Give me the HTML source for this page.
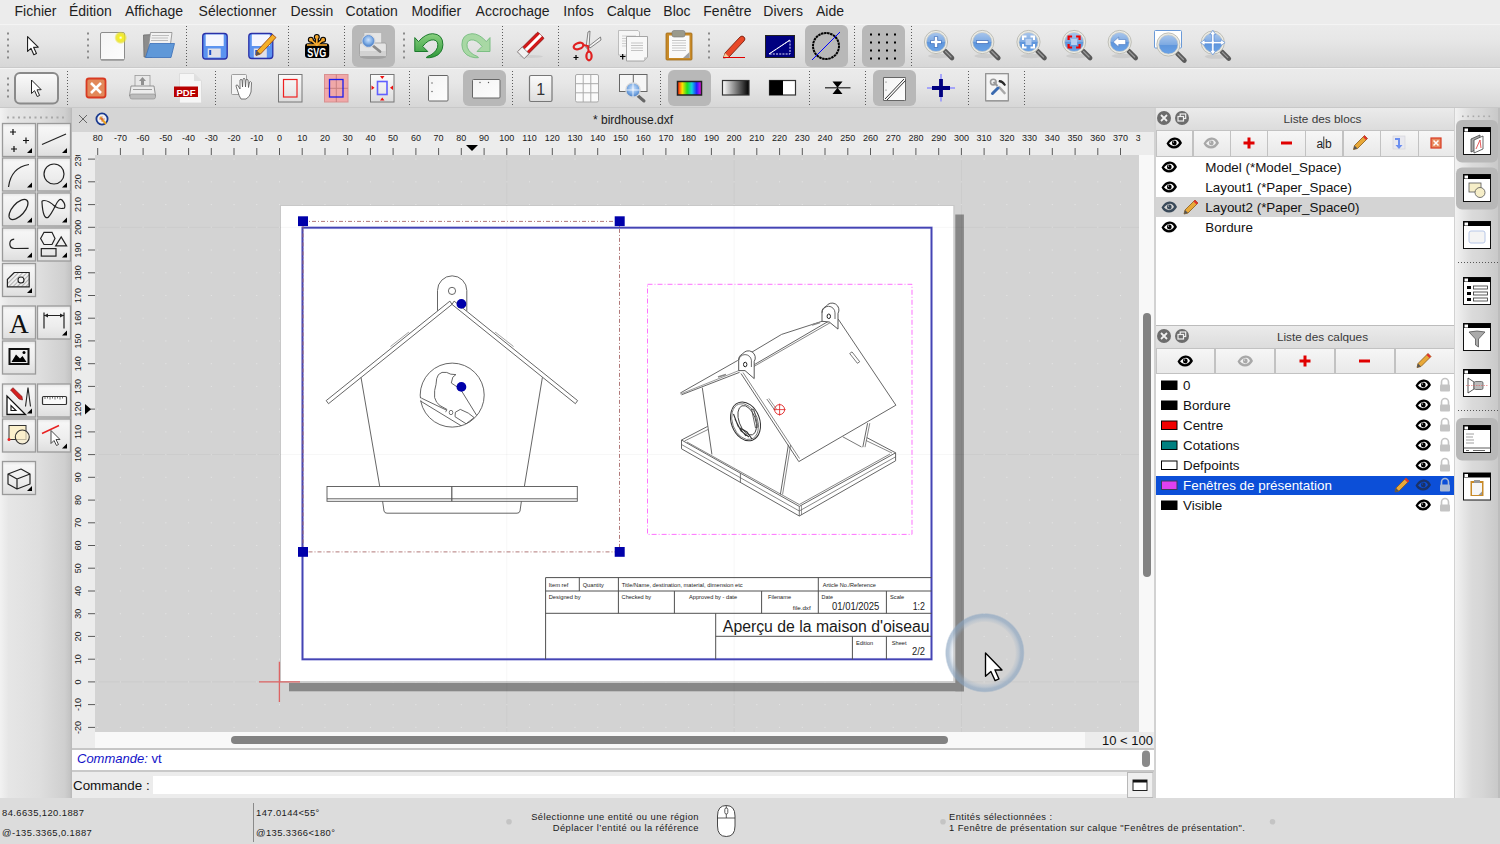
<!DOCTYPE html>
<html><head><meta charset="utf-8"><style>
*{margin:0;padding:0;box-sizing:border-box}
html,body{width:1500px;height:844px;overflow:hidden;background:#ececec;font-family:"Liberation Sans",sans-serif;color:#000}
.a{position:absolute}
.t{position:absolute;white-space:nowrap;line-height:1}
svg.ov{position:absolute;left:0;top:0;width:1500px;height:844px}
svg text{font-family:"Liberation Sans",sans-serif}
.tb{position:absolute;left:0;width:1500px;background:linear-gradient(#ebebeb,#e7e7e7 35%,#d6d6d6)}
.tog{position:absolute;background:#b8b8b8;border-radius:6px}
</style></head><body>
<div class="a" style="left:0;top:0;width:1500px;height:24px;background:#ececec"></div>
<span class="t" style="left:14.5px;top:4px;font-size:14px;color:#1e1e1e">Fichier</span>
<span class="t" style="left:69px;top:4px;font-size:14px;color:#1e1e1e">Édition</span>
<span class="t" style="left:125px;top:4px;font-size:14px;color:#1e1e1e">Affichage</span>
<span class="t" style="left:198.6px;top:4px;font-size:14px;color:#1e1e1e">Sélectionner</span>
<span class="t" style="left:290.6px;top:4px;font-size:14px;color:#1e1e1e">Dessin</span>
<span class="t" style="left:345.6px;top:4px;font-size:14px;color:#1e1e1e">Cotation</span>
<span class="t" style="left:411.4px;top:4px;font-size:14px;color:#1e1e1e">Modifier</span>
<span class="t" style="left:475.6px;top:4px;font-size:14px;color:#1e1e1e">Accrochage</span>
<span class="t" style="left:563.3px;top:4px;font-size:14px;color:#1e1e1e">Infos</span>
<span class="t" style="left:606.7px;top:4px;font-size:14px;color:#1e1e1e">Calque</span>
<span class="t" style="left:663.3px;top:4px;font-size:14px;color:#1e1e1e">Bloc</span>
<span class="t" style="left:703.3px;top:4px;font-size:14px;color:#1e1e1e">Fenêtre</span>
<span class="t" style="left:763.3px;top:4px;font-size:14px;color:#1e1e1e">Divers</span>
<span class="t" style="left:816px;top:4px;font-size:14px;color:#1e1e1e">Aide</span>
<div class="tb" style="top:24px;height:44px;border-top:1px solid #f4f4f4"></div>
<div class="tb" style="top:68px;height:40px;border-top:1px solid #f4f4f4"></div>
<div class="a" style="left:0;top:107px;width:1500px;height:1px;background:#c8c8c8"></div>
<div class="a" style="left:0;top:67px;width:1500px;height:1px;background:#cacaca"></div>
<div class="tog" style="left:352px;top:25px;width:43px;height:42px"></div>
<div class="tog" style="left:805px;top:25px;width:43px;height:42px"></div>
<div class="tog" style="left:862px;top:25px;width:43px;height:42px"></div>
<div class="tog" style="left:463px;top:70px;width:43px;height:36px"></div>
<div class="tog" style="left:668px;top:70px;width:43px;height:36px"></div>
<div class="tog" style="left:873px;top:70px;width:43px;height:36px"></div>
<div class="a" style="left:0;top:108px;width:72px;height:690px;background:linear-gradient(90deg,#f2f2f2 0%,#e6e6e6 12%,#dedede 55%,#cfcfcf 90%,#c4c4c4 97%,#b8b8b8)"></div>
<div class="a" style="left:72px;top:108px;width:1082px;height:24px;background:#d5d5d5"></div>
<div class="a" style="left:72px;top:132px;width:1082px;height:23px;background:#ececec"></div>
<div class="a" style="left:72px;top:155px;width:23px;height:593px;background:#ececec"></div>
<div class="a" style="left:95px;top:155px;width:1044px;height:577px;background:#d3d3d3"></div>
<div class="a" style="left:1139px;top:155px;width:15px;height:577px;background:#f8f8f8"></div>
<div class="a" style="left:95px;top:732px;width:990px;height:16px;background:#f8f8f8"></div>
<div class="a" style="left:1085px;top:732px;width:69px;height:16px;background:#ececec"></div>
<div class="a" style="left:72px;top:748px;width:1082px;height:2px;background:#c6c6c6"></div>
<div class="a" style="left:72px;top:750px;width:1082px;height:20px;background:#fff"></div>
<div class="a" style="left:72px;top:770px;width:1082px;height:2px;background:#c9c9c9"></div>
<div class="a" style="left:72px;top:772px;width:1082px;height:26px;background:#ececec"></div>
<div class="a" style="left:153px;top:776px;width:974px;height:18px;background:#fff"></div>
<div class="a" style="left:1154px;top:108px;width:301px;height:690px;background:#d2d2d2"></div>
<div class="a" style="left:1455px;top:108px;width:45px;height:690px;background:linear-gradient(90deg,#f2f2f2,#dadada 38%,#d6d6d6 60%,#c9c9c9 95%,#bdbdbd 95.5%)"></div>
<div class="a" style="left:0;top:798px;width:1500px;height:46px;background:#dcdcdc"></div><div class="a" style="left:1156px;top:108px;width:298px;height:22px;background:linear-gradient(#ebebeb,#dcdcdc)"></div>
<div class="a" style="left:1156px;top:130px;width:298px;height:26.5px;background:#c2c2c2"></div>
<div class="a" style="left:1156.5px;top:131px;width:35.799999999999955px;height:24.5px;background:linear-gradient(#f6f6f6,#e9e9e9)"></div>
<div class="a" style="left:1193.8px;top:131px;width:35.90000000000009px;height:24.5px;background:linear-gradient(#f6f6f6,#e9e9e9)"></div>
<div class="a" style="left:1231px;top:131px;width:36px;height:24.5px;background:linear-gradient(#f6f6f6,#e9e9e9)"></div>
<div class="a" style="left:1268.4px;top:131px;width:36.299999999999955px;height:24.5px;background:linear-gradient(#f6f6f6,#e9e9e9)"></div>
<div class="a" style="left:1306px;top:131px;width:36px;height:24.5px;background:linear-gradient(#f6f6f6,#e9e9e9)"></div>
<div class="a" style="left:1343.5px;top:131px;width:36.09999999999991px;height:24.5px;background:linear-gradient(#f6f6f6,#e9e9e9)"></div>
<div class="a" style="left:1381px;top:131px;width:36.700000000000045px;height:24.5px;background:linear-gradient(#f6f6f6,#e9e9e9)"></div>
<div class="a" style="left:1419px;top:131px;width:34.5px;height:24.5px;background:linear-gradient(#f6f6f6,#e9e9e9)"></div>
<div class="a" style="left:1156px;top:156.5px;width:298px;height:168px;background:#fff"></div>
<div class="a" style="left:1156px;top:197px;width:298px;height:20px;background:#d4d4d4"></div>
<div class="a" style="left:1156px;top:324.5px;width:298px;height:1.5px;background:#bcbcbc"></div>
<div class="a" style="left:1156px;top:326px;width:298px;height:22px;background:linear-gradient(#ebebeb,#dcdcdc)"></div>
<div class="a" style="left:1156px;top:348px;width:298px;height:26px;background:#c2c2c2"></div>
<div class="a" style="left:1156.5px;top:349px;width:57.5px;height:24px;background:linear-gradient(#f6f6f6,#e9e9e9)"></div>
<div class="a" style="left:1215.5px;top:349px;width:58.700000000000045px;height:24px;background:linear-gradient(#f6f6f6,#e9e9e9)"></div>
<div class="a" style="left:1275.7px;top:349px;width:58.700000000000045px;height:24px;background:linear-gradient(#f6f6f6,#e9e9e9)"></div>
<div class="a" style="left:1336px;top:349px;width:58px;height:24px;background:linear-gradient(#f6f6f6,#e9e9e9)"></div>
<div class="a" style="left:1395.5px;top:349px;width:58.0px;height:24px;background:linear-gradient(#f6f6f6,#e9e9e9)"></div>
<div class="a" style="left:1156px;top:374px;width:298px;height:424px;background:#fff"></div>
<div class="a" style="left:1156px;top:475.5px;width:298px;height:19.5px;background:#0c4fd8"></div>
<svg class="ov" width="1500" height="844" viewBox="0 0 1500 844">
<defs>
<linearGradient id="gpage" x1="0" y1="0" x2="1" y2="1"><stop offset="0" stop-color="#f4f4f4"/><stop offset="1" stop-color="#fdfdfd"/></linearGradient>
<linearGradient id="gbtn" x1="0" y1="0" x2="0" y2="1"><stop offset="0" stop-color="#fbfbfb"/><stop offset="0.6" stop-color="#eaeaea"/><stop offset="1" stop-color="#dcdcdc"/></linearGradient>
<linearGradient id="gblue" x1="0" y1="0" x2="0" y2="1"><stop offset="0" stop-color="#7ab0f4"/><stop offset="1" stop-color="#3f86e6"/></linearGradient>
<radialGradient id="gstar"><stop offset="0" stop-color="#ffffff"/><stop offset="0.3" stop-color="#f6f020"/><stop offset="0.7" stop-color="#e8e020" stop-opacity="0.8"/><stop offset="1" stop-color="#e8e020" stop-opacity="0"/></radialGradient>
<radialGradient id="glens" cx="0.5" cy="0.4"><stop offset="0" stop-color="#cfe2fb"/><stop offset="0.7" stop-color="#7faee6"/><stop offset="1" stop-color="#5d8fd0"/></radialGradient>
<linearGradient id="grain" x1="0" x2="1"><stop offset="0" stop-color="#ff1010"/><stop offset="0.2" stop-color="#ffe000"/><stop offset="0.4" stop-color="#20e020"/><stop offset="0.6" stop-color="#10d0e0"/><stop offset="0.8" stop-color="#2020ff"/><stop offset="1" stop-color="#ff10e0"/></linearGradient>
<linearGradient id="ggrad" x1="0" x2="1"><stop offset="0" stop-color="#ffffff"/><stop offset="1" stop-color="#000000"/></linearGradient>
<linearGradient id="ggreen" x1="0" y1="0" x2="0" y2="1"><stop offset="0" stop-color="#8ad080"/><stop offset="1" stop-color="#2f9a3a"/></linearGradient>
</defs>
<rect x="7" y="32.5" width="2" height="2" fill="#8a8a8a"/>
<rect x="7" y="38.5" width="2" height="2" fill="#8a8a8a"/>
<rect x="7" y="44.5" width="2" height="2" fill="#8a8a8a"/>
<rect x="7" y="50.5" width="2" height="2" fill="#8a8a8a"/>
<rect x="7" y="56.5" width="2" height="2" fill="#8a8a8a"/>
<path transform="translate(27,36) scale(1.1)" d="M0.5,0.5 L0.5,14 L3.6,11.2 L6.2,17 L8.6,16 L6,10.3 L10.2,10.2 Z" fill="#fff" stroke="#222" stroke-width="1" stroke-linejoin="round"/>
<rect x="87" y="32.5" width="2" height="2" fill="#8a8a8a"/>
<rect x="87" y="38.5" width="2" height="2" fill="#8a8a8a"/>
<rect x="87" y="44.5" width="2" height="2" fill="#8a8a8a"/>
<rect x="87" y="50.5" width="2" height="2" fill="#8a8a8a"/>
<rect x="87" y="56.5" width="2" height="2" fill="#8a8a8a"/>
<rect x="100.5" y="32.5" width="24" height="27.5" rx="1.5" fill="url(#gpage)" stroke="#8c8c8c" stroke-width="1"/>
<rect x="101" y="59" width="23" height="1.5" fill="#9a9a9a"/>
<circle cx="120.7" cy="37.7" r="6.5" fill="url(#gstar)"/>
<path d="M143.5,35 L153,34.5 L152,57 L144,57 Z" fill="#8c8c8c" stroke="#6e6e6e" stroke-width="0.8"/>
<path d="M150.5,32.5 L172,32.5 L170,48 L148,50 Z" fill="#f2f2f2" stroke="#8a8a8a" stroke-width="0.8"/>
<path d="M152,35.5 L169,35.5 M151.5,38 L168,38 M151,40.5 L168,40.5" stroke="#bdbdbd" stroke-width="1.2"/>
<path d="M150,43.5 L174.5,43.5 L171,57.5 L145.5,57.5 Z" fill="#5f98d8" stroke="#3a6fb8" stroke-width="0.8"/>
<line x1="186.5" y1="26" x2="186.5" y2="66" stroke="#5a5a5a" stroke-width="1" stroke-dasharray="1 2"/>
<g transform="translate(202.2,33)">
<rect x="0.5" y="0.5" width="24.5" height="25.5" rx="3" fill="#5b93f0" stroke="#2a30a8" stroke-width="1.3"/>
<rect x="3.5" y="1.5" width="18" height="11.5" fill="#f4f6ff"/>
<rect x="5.5" y="15.5" width="13" height="9" fill="#e0e0e8"/>
<rect x="7" y="17" width="2" height="5" fill="#2050c8"/>
</g>
<g transform="translate(248.3,33)">
<rect x="0.5" y="0.5" width="24" height="25" rx="3" fill="#5b93f0" stroke="#2a30a8" stroke-width="1.3"/>
<rect x="3.5" y="1.5" width="18" height="11.5" fill="#f4f6ff"/>
<rect x="5.5" y="15.5" width="13" height="9" fill="#e0e0e8"/>
<rect x="7" y="17" width="2" height="5" fill="#2050c8"/>
</g>
<path d="M257,51 L272.5,34.5 L276,37.5 L260.5,54 L256,55.5 Z" fill="#f4b028" stroke="#a04c10" stroke-width="0.9"/>
<path d="M256,55.5 L257,51 L260.5,54 Z" fill="#555"/>
<line x1="288.5" y1="26" x2="288.5" y2="66" stroke="#5a5a5a" stroke-width="1" stroke-dasharray="1 2"/>
<g stroke="#000" stroke-width="4.2" stroke-linecap="round"><line x1="316.8" y1="45" x2="310.8" y2="39.7"/><line x1="316.8" y1="45" x2="316.8" y2="36.9"/><line x1="316.8" y1="45" x2="323.1" y2="39.7"/></g>
<circle cx="310.8" cy="39.7" r="3" fill="#000"/>
<circle cx="316.8" cy="36.9" r="3" fill="#000"/>
<circle cx="323.1" cy="39.7" r="3" fill="#000"/>
<rect x="305" y="43.2" width="24.2" height="14.8" rx="3.2" fill="#000"/>
<g stroke="#f4a830" stroke-width="1.8" stroke-linecap="round"><line x1="316.8" y1="45" x2="310.8" y2="39.7"/><line x1="316.8" y1="45" x2="316.8" y2="36.9"/><line x1="316.8" y1="45" x2="323.1" y2="39.7"/></g>
<circle cx="310.8" cy="39.7" r="1.9" fill="#f4a830"/>
<circle cx="316.8" cy="36.9" r="1.9" fill="#f4a830"/>
<circle cx="323.1" cy="39.7" r="1.9" fill="#f4a830"/>
<rect x="307" y="44.2" width="20" height="1.6" fill="#f4a830"/>
<text x="316.8" y="56.6" text-anchor="middle" style="font-size:12.5px;font-weight:bold" fill="#fff" textLength="19" lengthAdjust="spacingAndGlyphs">SVG</text>
<line x1="344.5" y1="26" x2="344.5" y2="66" stroke="#5a5a5a" stroke-width="1" stroke-dasharray="1 2"/>
<ellipse cx="373" cy="57" rx="13" ry="2" fill="#8a8a8a" opacity="0.5"/>
<rect x="364" y="32.7" width="17.7" height="12" fill="#e6e6e6" stroke="#b0b0b0" stroke-width="0.7"/>
<path d="M361,43 L385,43 Q386.4,43 386.4,45 L386.4,54.5 Q386.4,56.5 384.5,56.5 L361.5,56.5 Q359.5,56.5 359.5,54.5 L359.5,45 Q359.5,43 361,43 Z" fill="#e4e4e4" stroke="#9a9a9a" stroke-width="0.8"/>
<rect x="360" y="51" width="26" height="5" fill="#d2d2d2"/>
<line x1="372" y1="45" x2="380" y2="51.5" stroke="#8a8a8a" stroke-width="2.8" stroke-linecap="round"/>
<circle cx="368.4" cy="41" r="6.6" fill="#f0f0f0" stroke="#c8c8c8" stroke-width="0.6"/>
<circle cx="368.4" cy="41" r="5.6" fill="url(#glens)" stroke="#5a8ad0" stroke-width="0.8"/>
<rect x="403" y="32.5" width="2" height="2" fill="#8a8a8a"/>
<rect x="403" y="38.5" width="2" height="2" fill="#8a8a8a"/>
<rect x="403" y="44.5" width="2" height="2" fill="#8a8a8a"/>
<rect x="403" y="50.5" width="2" height="2" fill="#8a8a8a"/>
<rect x="403" y="56.5" width="2" height="2" fill="#8a8a8a"/>
<path transform="translate(414.3,33.7)" d="M0.5,3.9 L4.2,7.9 Q11,0 18.4,0 Q28.6,0.5 28.6,11 Q28.3,20 20,23 Q15,24.5 12.2,24 Q12,23.2 13,22.8 Q21,20 23.3,13.5 Q24.5,7 19.5,6.2 Q14,5.5 8.4,12.7 L13.5,17.8 L0.5,17.8 Z" fill="url(#ggreen)" stroke="#1c7a2c" stroke-width="1" stroke-linejoin="round"/>
<path transform="translate(461.5,33.7) translate(29,0) scale(-1,1)" d="M0.5,3.9 L4.2,7.9 Q11,0 18.4,0 Q28.6,0.5 28.6,11 Q28.3,20 20,23 Q15,24.5 12.2,24 Q12,23.2 13,22.8 Q21,20 23.3,13.5 Q24.5,7 19.5,6.2 Q14,5.5 8.4,12.7 L13.5,17.8 L0.5,17.8 Z" fill="#a8d8a4" stroke="#7cbf84" stroke-width="1" stroke-linejoin="round"/>
<line x1="502.5" y1="26" x2="502.5" y2="66" stroke="#5a5a5a" stroke-width="1" stroke-dasharray="1 2"/>
<ellipse cx="531" cy="56.5" rx="12" ry="1.5" fill="#cfcfcf"/>
<g transform="translate(531,45) rotate(-45)"><rect x="-14" y="-4.5" width="28" height="9" rx="1" fill="#d41818" stroke="#8a1010" stroke-width="0.8"/><rect x="-14" y="-1.5" width="28" height="3" fill="#fff"/><rect x="-14.5" y="-4.8" width="7" height="9.6" fill="#f2f2f2" stroke="#777" stroke-width="0.8"/></g>
<line x1="558.5" y1="26" x2="558.5" y2="66" stroke="#5a5a5a" stroke-width="1" stroke-dasharray="1 2"/>
<path d="M586,48 L588,32 L590,31 L589,48 Z" fill="#f4f4f4" stroke="#666" stroke-width="0.8"/>
<path d="M589,46 L600.5,37 L601,40 L590,48 Z" fill="#f4f4f4" stroke="#666" stroke-width="0.8"/>
<ellipse cx="578.5" cy="46" rx="5" ry="3" fill="none" stroke="#e02020" stroke-width="2.2" transform="rotate(-20 578.5 46)"/>
<ellipse cx="589" cy="56" rx="2.6" ry="4.3" fill="none" stroke="#e02020" stroke-width="2.2"/>
<path d="M583,45 L588,46 L588.5,51" stroke="#e02020" stroke-width="2" fill="none"/>
<path d="M573.5,57.5 h5 M576,55 v5" stroke="#000" stroke-width="1.2"/>
<path d="M618.5,30.5 L638,30.5 L639.5,32 L639.5,55 L618.5,55 Z" fill="#f6f6f6" stroke="#b0b0b0" stroke-width="0.8"/>
<line x1="622" y1="36" x2="636" y2="36" stroke="#cfcfcf" stroke-width="1"/>
<line x1="622" y1="38.5" x2="636" y2="38.5" stroke="#cfcfcf" stroke-width="1"/>
<line x1="622" y1="41" x2="636" y2="41" stroke="#cfcfcf" stroke-width="1"/>
<line x1="622" y1="43.5" x2="636" y2="43.5" stroke="#cfcfcf" stroke-width="1"/>
<line x1="622" y1="46" x2="636" y2="46" stroke="#cfcfcf" stroke-width="1"/>
<path d="M626.5,36.5 L647.5,36.5 L647.5,57 L644,61 L626.5,61 Z" fill="#f8f8f8" stroke="#9c9c9c" stroke-width="0.9"/>
<path d="M644,61 L644,57.5 L647.5,57 Z" fill="#c8c8c8"/>
<line x1="631" y1="43" x2="643" y2="43" stroke="#c4c4c4" stroke-width="1"/>
<line x1="631" y1="45.5" x2="643" y2="45.5" stroke="#c4c4c4" stroke-width="1"/>
<line x1="631" y1="48" x2="643" y2="48" stroke="#c4c4c4" stroke-width="1"/>
<line x1="631" y1="50.5" x2="643" y2="50.5" stroke="#c4c4c4" stroke-width="1"/>
<path d="M620,56.5 h5.5 M622.7,54 v5.5" stroke="#000" stroke-width="1.2"/>
<rect x="666" y="33" width="26" height="27" rx="1" fill="#c88a28" stroke="#a06a18" stroke-width="0.8"/>
<rect x="669" y="35.5" width="20.5" height="22.5" fill="#fafafa"/>
<rect x="672" y="30.5" width="13" height="6.5" rx="2" fill="#9a9a8c" stroke="#777" stroke-width="0.6"/>
<line x1="672" y1="40.5" x2="686" y2="40.5" stroke="#c8c8c8" stroke-width="1"/>
<line x1="672" y1="43" x2="686" y2="43" stroke="#c8c8c8" stroke-width="1"/>
<line x1="672" y1="45.5" x2="686" y2="45.5" stroke="#c8c8c8" stroke-width="1"/>
<line x1="672" y1="48" x2="686" y2="48" stroke="#c8c8c8" stroke-width="1"/>
<line x1="672" y1="50.5" x2="686" y2="50.5" stroke="#c8c8c8" stroke-width="1"/>
<path d="M683,58 L689.5,58 L689.5,52 Z" fill="#a0a0a0"/>
<rect x="708" y="32.5" width="2" height="2" fill="#8a8a8a"/>
<rect x="708" y="38.5" width="2" height="2" fill="#8a8a8a"/>
<rect x="708" y="44.5" width="2" height="2" fill="#8a8a8a"/>
<rect x="708" y="50.5" width="2" height="2" fill="#8a8a8a"/>
<rect x="708" y="56.5" width="2" height="2" fill="#8a8a8a"/>
<path d="M725,53 L740,37 Q742,35 744,37 Q746,39 744,41 L729,57 L723.5,58 Z" fill="#e84828" stroke="#7a2010" stroke-width="0.9"/>
<path d="M723.5,58 L725,53 L729,57 Z" fill="#f0d0a0"/>
<line x1="723" y1="57.5" x2="745" y2="57.5" stroke="#e00000" stroke-width="1"/>
<rect x="765.5" y="35.5" width="29" height="22" fill="#000080" stroke="#222" stroke-width="1"/>
<path d="M769,54 L790,40 L790,54 Z" fill="none" stroke="#e0e0ff" stroke-width="1" stroke-dasharray="2 1.2"/>
<line x1="769" y1="54" x2="790" y2="40" stroke="#fff" stroke-width="1"/>
<circle cx="826" cy="46" r="13" fill="none" stroke="#000" stroke-width="2" stroke-dasharray="2.5 0.6"/>
<line x1="812" y1="60" x2="840" y2="32" stroke="#0000ff" stroke-width="1"/>
<line x1="854.5" y1="26" x2="854.5" y2="66" stroke="#5a5a5a" stroke-width="1" stroke-dasharray="1 2"/>
<rect x="870" y="33.5" width="2" height="2" fill="#000"/>
<rect x="878" y="33.5" width="2" height="2" fill="#000"/>
<rect x="886" y="33.5" width="2" height="2" fill="#000"/>
<rect x="894" y="33.5" width="2" height="2" fill="#000"/>
<rect x="870" y="41.5" width="2" height="2" fill="#000"/>
<rect x="878" y="41.5" width="2" height="2" fill="#000"/>
<rect x="886" y="41.5" width="2" height="2" fill="#000"/>
<rect x="894" y="41.5" width="2" height="2" fill="#000"/>
<rect x="870" y="49.5" width="2" height="2" fill="#000"/>
<rect x="878" y="49.5" width="2" height="2" fill="#000"/>
<rect x="886" y="49.5" width="2" height="2" fill="#000"/>
<rect x="894" y="49.5" width="2" height="2" fill="#000"/>
<rect x="870" y="57.5" width="2" height="2" fill="#000"/>
<rect x="878" y="57.5" width="2" height="2" fill="#000"/>
<rect x="886" y="57.5" width="2" height="2" fill="#000"/>
<rect x="894" y="57.5" width="2" height="2" fill="#000"/>
<line x1="911.5" y1="26" x2="911.5" y2="66" stroke="#5a5a5a" stroke-width="1" stroke-dasharray="1 2"/>
<defs><linearGradient id="glens2" x1="0" y1="0" x2="0" y2="1"><stop offset="0" stop-color="#a9c6ec"/><stop offset="0.5" stop-color="#7eaae2"/><stop offset="0.52" stop-color="#5f96dc"/><stop offset="1" stop-color="#6aa2e6"/></linearGradient></defs>
<ellipse cx="939" cy="56" rx="11" ry="2.2" fill="#b8b8b8" opacity="0.45"/><line x1="945" y1="51" x2="952" y2="58" stroke="#5a5a5a" stroke-width="4.6" stroke-linecap="round"/>
<line x1="945.5" y1="51.5" x2="951" y2="57" stroke="#9a9a9a" stroke-width="1.2" stroke-linecap="round"/>
<circle cx="936" cy="42" r="11.6" fill="#ecece6" stroke="#b8b8b0" stroke-width="0.9"/>
<circle cx="936" cy="42" r="9.6" fill="url(#glens2)" stroke="#c8c8c0" stroke-width="0.6"/>
<g transform="translate(936,42)"><path d="M-5.5,0 h11 M0,-5.5 v11" stroke="#3a6ab8" stroke-width="4.2"/><path d="M-5,0 h10 M0,-5 v10" stroke="#fff" stroke-width="2.6"/></g>
<ellipse cx="985.3" cy="56" rx="11" ry="2.2" fill="#b8b8b8" opacity="0.45"/><line x1="991.3" y1="51" x2="998.3" y2="58" stroke="#5a5a5a" stroke-width="4.6" stroke-linecap="round"/>
<line x1="991.8" y1="51.5" x2="997.3" y2="57" stroke="#9a9a9a" stroke-width="1.2" stroke-linecap="round"/>
<circle cx="982.3" cy="42" r="11.6" fill="#ecece6" stroke="#b8b8b0" stroke-width="0.9"/>
<circle cx="982.3" cy="42" r="9.6" fill="url(#glens2)" stroke="#c8c8c0" stroke-width="0.6"/>
<g transform="translate(982.3,42)"><path d="M-6,0 h12" stroke="#3a6ab8" stroke-width="4"/><path d="M-5.5,0 h11" stroke="#fff" stroke-width="2.4"/></g>
<ellipse cx="1031.5" cy="56" rx="11" ry="2.2" fill="#b8b8b8" opacity="0.45"/><line x1="1037.5" y1="51" x2="1044.5" y2="58" stroke="#5a5a5a" stroke-width="4.6" stroke-linecap="round"/>
<line x1="1038.0" y1="51.5" x2="1043.5" y2="57" stroke="#9a9a9a" stroke-width="1.2" stroke-linecap="round"/>
<circle cx="1028.5" cy="42" r="11.6" fill="#ecece6" stroke="#b8b8b0" stroke-width="0.9"/>
<circle cx="1028.5" cy="42" r="9.6" fill="url(#glens2)" stroke="#c8c8c0" stroke-width="0.6"/>
<g transform="translate(1028.5,42)"><rect x="-3" y="-3" width="6" height="6" fill="#b8d0f0"/><path d="M-5.5,-2 v-3.5 h3.5 M2,-5.5 h3.5 v3.5 M5.5,2 v3.5 h-3.5 M-2,5.5 h-3.5 v-3.5" stroke="#fff" stroke-width="2" fill="none"/></g>
<ellipse cx="1077.1" cy="56" rx="11" ry="2.2" fill="#b8b8b8" opacity="0.45"/><line x1="1083.1" y1="51" x2="1090.1" y2="58" stroke="#5a5a5a" stroke-width="4.6" stroke-linecap="round"/>
<line x1="1083.6" y1="51.5" x2="1089.1" y2="57" stroke="#9a9a9a" stroke-width="1.2" stroke-linecap="round"/>
<circle cx="1074.1" cy="42" r="11.6" fill="#ecece6" stroke="#b8b8b0" stroke-width="0.9"/>
<circle cx="1074.1" cy="42" r="9.6" fill="url(#glens2)" stroke="#c8c8c0" stroke-width="0.6"/>
<g transform="translate(1074.1,42)"><rect x="-3" y="-3" width="6" height="6" fill="#b8d0f0"/><path d="M-5.5,-2 v-3.5 h3.5 M2,-5.5 h3.5 v3.5 M5.5,2 v3.5 h-3.5 M-2,5.5 h-3.5 v-3.5" stroke="#ee0000" stroke-width="2.2" fill="none"/></g>
<ellipse cx="1122.7" cy="56" rx="11" ry="2.2" fill="#b8b8b8" opacity="0.45"/><line x1="1128.7" y1="51" x2="1135.7" y2="58" stroke="#5a5a5a" stroke-width="4.6" stroke-linecap="round"/>
<line x1="1129.2" y1="51.5" x2="1134.7" y2="57" stroke="#9a9a9a" stroke-width="1.2" stroke-linecap="round"/>
<circle cx="1119.7" cy="42" r="11.6" fill="#ecece6" stroke="#b8b8b0" stroke-width="0.9"/>
<circle cx="1119.7" cy="42" r="9.6" fill="url(#glens2)" stroke="#c8c8c0" stroke-width="0.6"/>
<g transform="translate(1119.7,42)"><path d="M-6.5,0 L-1,-5 L-1,-2.5 L6,-2.5 L6,2.5 L-1,2.5 L-1,5 Z" fill="#fff" stroke="#4a78c0" stroke-width="0.6"/></g>
<rect x="1154.5" y="30.5" width="27" height="17.5" rx="1" fill="#fff" stroke="#6a9ad8" stroke-width="1"/>
<line x1="1177.4" y1="53.5" x2="1184.4" y2="60.5" stroke="#5a5a5a" stroke-width="4.6" stroke-linecap="round"/>
<line x1="1177.9" y1="54.0" x2="1183.4" y2="59.5" stroke="#9a9a9a" stroke-width="1.2" stroke-linecap="round"/>
<circle cx="1168.4" cy="44.5" r="11.6" fill="#ecece6" stroke="#b8b8b0" stroke-width="0.9"/>
<circle cx="1168.4" cy="44.5" r="9.6" fill="url(#glens2)" stroke="#c8c8c0" stroke-width="0.6"/>
<g transform="translate(1168.4,44.5)"></g>
<ellipse cx="1215.8" cy="56.6" rx="11" ry="2.2" fill="#b8b8b8" opacity="0.45"/><line x1="1221.8" y1="51.6" x2="1228.8" y2="58.6" stroke="#5a5a5a" stroke-width="4.6" stroke-linecap="round"/>
<line x1="1222.3" y1="52.1" x2="1227.8" y2="57.6" stroke="#9a9a9a" stroke-width="1.2" stroke-linecap="round"/>
<circle cx="1212.8" cy="42.6" r="11.6" fill="#ecece6" stroke="#b8b8b0" stroke-width="0.9"/>
<circle cx="1212.8" cy="42.6" r="9.6" fill="url(#glens2)" stroke="#c8c8c0" stroke-width="0.6"/>
<g transform="translate(1212.8,42.6)"><path d="M0,-12.3 L3,-8 L1.2,-8 L1.2,-1.2 L8,-1.2 L8,-3 L12.3,0 L8,3 L8,1.2 L1.2,1.2 L1.2,8 L3,8 L0,12.3 L-3,8 L-1.2,8 L-1.2,1.2 L-8,1.2 L-8,3 L-12.3,0 L-8,-3 L-8,-1.2 L-1.2,-1.2 L-1.2,-8 L-3,-8 Z" fill="#fff" stroke="#5a8ed8" stroke-width="0.7"/></g>
<rect x="7" y="77.5" width="2" height="2" fill="#8a8a8a"/>
<rect x="7" y="83.5" width="2" height="2" fill="#8a8a8a"/>
<rect x="7" y="89.5" width="2" height="2" fill="#8a8a8a"/>
<rect x="7" y="95.5" width="2" height="2" fill="#8a8a8a"/>
<rect x="15" y="73" width="43" height="30.5" rx="5" fill="url(#gbtn)" stroke="#8a8a8a" stroke-width="2"/>
<path transform="translate(31,79.5) scale(1.0)" d="M0.5,0.5 L0.5,14 L3.6,11.2 L6.2,17 L8.6,16 L6,10.3 L10.2,10.2 Z" fill="#fff" stroke="#222" stroke-width="1" stroke-linejoin="round"/>
<line x1="67.5" y1="71" x2="67.5" y2="106" stroke="#5a5a5a" stroke-width="1" stroke-dasharray="1 2"/>
<rect x="86.5" y="78.5" width="19" height="19" rx="2.5" fill="#e2895a" stroke="#d83a22" stroke-width="1.8"/>
<path d="M91,83 L101,93 M101,83 L91,93" stroke="#fff" stroke-width="2.6"/>
<rect x="135" y="75.5" width="15" height="11" fill="#e8e8e8" stroke="#9a9a9a" stroke-width="0.8"/>
<path d="M142.5,77 L146,81 L144,81 L144,85 L141,85 L141,81 L139,81 Z" fill="#909090"/>
<path d="M131,86 L154,86 L155.5,96 L129.5,96 Z" fill="#ececec" stroke="#8a8a8a" stroke-width="0.9"/>
<rect x="130" y="94" width="25.5" height="5" rx="2" fill="#bcbcbc" stroke="#8a8a8a" stroke-width="0.6"/>
<line x1="133" y1="89.5" x2="152" y2="89.5" stroke="#8a8a8a" stroke-width="0.8"/>
<path d="M179.5,73.5 L194,73.5 L201.5,81 L201.5,103 L179.5,103 Z" fill="#f6f6f6" stroke="#d8d8d8" stroke-width="0.8"/>
<path d="M194,73.5 L194,81 L201.5,81 Z" fill="#e0e0e0"/>
<rect x="174" y="86.5" width="24" height="10.5" fill="#b80000"/>
<text x="186" y="95.5" text-anchor="middle" font-size="9.5" font-weight="bold" fill="#fff" textLength="19" lengthAdjust="spacingAndGlyphs">PDF</text>
<line x1="215.5" y1="71" x2="215.5" y2="106" stroke="#5a5a5a" stroke-width="1" stroke-dasharray="1 2"/>
<rect x="231.5" y="74.5" width="15" height="20" rx="1" fill="#f4f4f4" stroke="#8a8a8a" stroke-width="0.8"/>
<path d="M238,92 L236,86 Q236,84.5 237.5,85 L240,89 L240,80 Q241,78.5 242,80 L242.5,87 L243,79 Q244,77.5 245,79 L245.5,87 L246,80 Q247,78.5 248,80 L248.5,87.5 L249.5,82 Q250.5,81 251.5,82.5 L251,92 Q250,97 246,99 L241,99 Q239,96 238,92 Z" fill="#fff" stroke="#555" stroke-width="0.8"/>
<rect x="278.5" y="74.5" width="23.5" height="27.5" fill="url(#gbtn)" stroke="#777" stroke-width="1"/>
<rect x="283.5" y="79.5" width="13.5" height="17.5" fill="none" stroke="#ee2020" stroke-width="1.2"/>
<rect x="324.5" y="74.5" width="23.5" height="27.5" fill="#f0a8a8" stroke="#d89090" stroke-width="1"/>
<line x1="336.3" y1="74.5" x2="336.3" y2="102" stroke="#c88080" stroke-width="1"/><line x1="324.5" y1="88.3" x2="348" y2="88.3" stroke="#c88080" stroke-width="1"/>
<rect x="329.5" y="79.5" width="13.5" height="17.5" fill="none" stroke="#1a1aee" stroke-width="1.3"/>
<rect x="370.5" y="74.5" width="23.5" height="27.5" fill="url(#gbtn)" stroke="#777" stroke-width="1"/>
<rect x="377.5" y="81.5" width="9.5" height="13" fill="none" stroke="#6060ff" stroke-width="1.6"/>
<path d="M380,76 h4.5 l-2.25,3 Z M380,100.5 h4.5 l-2.25,-3 Z M371.5,85.5 v4.5 l3,-2.25 Z M393,85.5 v4.5 l-3,-2.25 Z" fill="#ee1010"/>
<line x1="409.5" y1="71" x2="409.5" y2="106" stroke="#5a5a5a" stroke-width="1" stroke-dasharray="1 2"/>
<rect x="428.5" y="75.5" width="19.5" height="25.5" rx="1" fill="url(#gpage)" stroke="#666" stroke-width="1"/>
<circle cx="432" cy="83" r="0.7" fill="#555"/><circle cx="432" cy="91.5" r="0.7" fill="#555"/>
<rect x="472.5" y="79.5" width="27.5" height="18.5" rx="1" fill="url(#gpage)" stroke="#666" stroke-width="1"/>
<circle cx="480" cy="82.5" r="0.7" fill="#555"/><circle cx="488.5" cy="82.5" r="0.7" fill="#555"/>
<line x1="512.5" y1="71" x2="512.5" y2="106" stroke="#5a5a5a" stroke-width="1" stroke-dasharray="1 2"/>
<rect x="529.5" y="75.5" width="22.5" height="26" rx="1.5" fill="url(#gbtn)" stroke="#777" stroke-width="1.2"/>
<text x="540.7" y="95.2" text-anchor="middle" style="font-size:16px" fill="#333">1</text>
<rect x="575.5" y="74.5" width="23" height="27.5" rx="1.5" fill="#fafafa" stroke="#aaa" stroke-width="1"/>
<path d="M583.2,74.5 v27.5 M590.8,74.5 v27.5 M575.5,83.7 h23 M575.5,92.8 h23" stroke="#aaa" stroke-width="1"/>
<rect x="619.5" y="74.5" width="27.5" height="17" fill="#f6f6f6" stroke="#666" stroke-width="1"/>
<line x1="633.3" y1="74.5" x2="633.3" y2="91.5" stroke="#666" stroke-width="1"/>
<line x1="637" y1="95" x2="644" y2="101" stroke="#666" stroke-width="3" stroke-linecap="round"/>
<circle cx="633" cy="90" r="7.2" fill="url(#glens)" stroke="#d8d8d8" stroke-width="1.2"/>
<line x1="626" y1="90" x2="640" y2="90" stroke="#fff" stroke-width="0.8"/><line x1="633" y1="83" x2="633" y2="97" stroke="#fff" stroke-width="0.8"/>
<line x1="660.5" y1="71" x2="660.5" y2="106" stroke="#5a5a5a" stroke-width="1" stroke-dasharray="1 2"/>
<rect x="677.5" y="81.5" width="24" height="13.5" fill="url(#grain)" stroke="#222" stroke-width="1.5"/>
<rect x="722.5" y="80.5" width="26.5" height="14.5" fill="url(#ggrad)" stroke="#333" stroke-width="1.2"/>
<rect x="769.5" y="80.5" width="26" height="14.5" fill="#fff" stroke="#333" stroke-width="1.2"/><rect x="769.5" y="80.5" width="13.5" height="14.5" fill="#000"/>
<line x1="809.5" y1="71" x2="809.5" y2="106" stroke="#5a5a5a" stroke-width="1" stroke-dasharray="1 2"/>
<line x1="825" y1="87.8" x2="850.5" y2="87.8" stroke="#222" stroke-width="1.2"/>
<path d="M832.5,81.5 L842.5,81.5 L837.5,87.8 Z M832.5,94 L842.5,94 L837.5,87.8 Z" fill="#000"/>
<line x1="865.5" y1="71" x2="865.5" y2="106" stroke="#5a5a5a" stroke-width="1" stroke-dasharray="1 2"/>
<rect x="883.5" y="77.5" width="22" height="23" fill="url(#gpage)" stroke="#666" stroke-width="1" stroke-dasharray="23 0"/>
<line x1="885" y1="99" x2="904" y2="79" stroke="#333" stroke-width="1"/><line x1="887" y1="100" x2="905.5" y2="80.5" stroke="#333" stroke-width="1"/>
<circle cx="886" cy="82" r="0.6" fill="#555"/><circle cx="886" cy="90" r="0.6" fill="#555"/>
<path d="M927,88 h28 M941,74 v27.5" stroke="#9090ff" stroke-width="1.5"/>
<path d="M932,88 h18 M941,79 v18" stroke="#000080" stroke-width="3.8"/>
<line x1="968.5" y1="71" x2="968.5" y2="106" stroke="#5a5a5a" stroke-width="1" stroke-dasharray="1 2"/>
<rect x="985.7" y="73.7" width="22.6" height="27" fill="#f4f4f4" stroke="#8a8a8a" stroke-width="1.2"/>
<rect x="985.5" y="100" width="23" height="1.5" fill="#9a9a9a"/>
<line x1="999.5" y1="87.5" x2="1004.5" y2="93" stroke="#a8a8a8" stroke-width="2.6" stroke-linecap="round"/>
<path d="M999,80 Q1003,79.5 1006,85 L1004.5,86 Q1002,82.5 998.5,82 Z" fill="#2a2a2a"/>
<line x1="997.5" y1="86" x2="993.5" y2="82" stroke="#999" stroke-width="2.2"/>
<circle cx="993.3" cy="82.1" r="2.8" fill="none" stroke="#9a9a9a" stroke-width="1.6"/>
<line x1="998" y1="88" x2="992.5" y2="93.5" stroke="#3a6ab0" stroke-width="3" stroke-linecap="round"/>
<line x1="1024.5" y1="71" x2="1024.5" y2="106" stroke="#5a5a5a" stroke-width="1" stroke-dasharray="1 2"/><rect x="7.0" y="116.5" width="2" height="2" fill="#a8a8a8"/>
<rect x="12.5" y="116.5" width="2" height="2" fill="#a8a8a8"/>
<rect x="18.0" y="116.5" width="2" height="2" fill="#a8a8a8"/>
<rect x="23.5" y="116.5" width="2" height="2" fill="#a8a8a8"/>
<rect x="29.0" y="116.5" width="2" height="2" fill="#a8a8a8"/>
<rect x="34.5" y="116.5" width="2" height="2" fill="#a8a8a8"/>
<rect x="40.0" y="116.5" width="2" height="2" fill="#a8a8a8"/>
<rect x="45.5" y="116.5" width="2" height="2" fill="#a8a8a8"/>
<rect x="51.0" y="116.5" width="2" height="2" fill="#a8a8a8"/>
<rect x="56.5" y="116.5" width="2" height="2" fill="#a8a8a8"/>
<rect x="62.0" y="116.5" width="2" height="2" fill="#a8a8a8"/>
<defs><linearGradient id="gtool" x1="0" y1="0" x2="0" y2="1"><stop offset="0" stop-color="#e6e6e6"/><stop offset="0.12" stop-color="#f6f6f6"/><stop offset="0.6" stop-color="#ededed"/><stop offset="1" stop-color="#dedede"/></linearGradient></defs>
<g transform="translate(2,123)"><rect x="0.5" y="0.5" width="33" height="33" fill="url(#gtool)" stroke="#9a9a9a" stroke-width="1.3"/><path d="M8,9 h6 M11,6 v6 M21,17.5 h6 M24,14.5 v6 M9,26 h6 M12,23 v6" stroke="#111" stroke-width="1.2"/><path d="M30,25 L30,30 L25,30 Z" fill="#000"/></g>
<g transform="translate(37,123)"><rect x="0.5" y="0.5" width="33" height="33" fill="url(#gtool)" stroke="#9a9a9a" stroke-width="1.3"/><line x1="5" y1="21.5" x2="29" y2="11" fill="none" stroke="#222" stroke-width="1.2"/><path d="M30,25 L30,30 L25,30 Z" fill="#000"/></g>
<g transform="translate(2,157.5)"><rect x="0.5" y="0.5" width="33" height="33" fill="url(#gtool)" stroke="#9a9a9a" stroke-width="1.3"/><path d="M6.5,29.5 Q9,10 27,7" fill="none" stroke="#222" stroke-width="1.2"/><path d="M30,25 L30,30 L25,30 Z" fill="#000"/></g>
<g transform="translate(37,157.5)"><rect x="0.5" y="0.5" width="33" height="33" fill="url(#gtool)" stroke="#9a9a9a" stroke-width="1.3"/><circle cx="17" cy="16.5" r="10" fill="none" stroke="#222" stroke-width="1.2"/><path d="M30,25 L30,30 L25,30 Z" fill="#000"/></g>
<g transform="translate(2,192.5)"><rect x="0.5" y="0.5" width="33" height="33" fill="url(#gtool)" stroke="#9a9a9a" stroke-width="1.3"/><ellipse cx="16.5" cy="17" rx="12.5" ry="6" transform="rotate(-48 16.5 17)" fill="none" stroke="#222" stroke-width="1.2"/><path d="M30,25 L30,30 L25,30 Z" fill="#000"/></g>
<g transform="translate(37,192.5)"><rect x="0.5" y="0.5" width="33" height="33" fill="url(#gtool)" stroke="#9a9a9a" stroke-width="1.3"/><path d="M5,10 Q6,27 11,25 Q14,22 18,14 Q22,5 25,7.5 Q29,12 27.5,15.5 Q23,17 18,14 Q12,8 7,8 Q4.5,8 5,10 Z" fill="none" stroke="#222" stroke-width="1.2"/><path d="M30,25 L30,30 L25,30 Z" fill="#000"/></g>
<g transform="translate(2,227.5)"><rect x="0.5" y="0.5" width="33" height="33" fill="url(#gtool)" stroke="#9a9a9a" stroke-width="1.3"/><path d="M12.2,11.6 Q7.8,12 7.8,16.4 Q8,21 12.5,21 L26.6,20.8" fill="none" stroke="#222" stroke-width="1.2"/><path d="M30,25 L30,30 L25,30 Z" fill="#000"/></g>
<g transform="translate(37,227.5)"><rect x="0.5" y="0.5" width="33" height="33" fill="url(#gtool)" stroke="#9a9a9a" stroke-width="1.3"/><path d="M3.6,11 L7,4.8 L15,4.8 L18,11 L15,17 L7,17 Z" fill="none" stroke="#222" stroke-width="1.2"/><path d="M18.7,18.4 L24.2,9.5 L29.6,18.4 Z" fill="none" stroke="#222" stroke-width="1.2"/><rect x="4.3" y="21.1" width="14.7" height="7.5" fill="none" stroke="#222" stroke-width="1.2"/><path d="M30,25 L30,30 L25,30 Z" fill="#000"/></g>
<g transform="translate(2,263)"><rect x="0.5" y="0.5" width="33" height="33" fill="url(#gtool)" stroke="#9a9a9a" stroke-width="1.3"/><defs><pattern id="hatch" width="3" height="3" patternUnits="userSpaceOnUse" patternTransform="rotate(45)"><line x1="0" y1="0" x2="0" y2="3" stroke="#555" stroke-width="0.8"/></pattern></defs>
<path d="M5.4,16.3 L12.2,9.5 L27.2,9.5 L27.2,23.8 L5.4,23.8 Z" fill="url(#hatch)" stroke="#222" stroke-width="1.2"/><circle cx="19" cy="17" r="3" fill="#f4f4f4" stroke="#222" stroke-width="1.1"/><path d="M30,25 L30,30 L25,30 Z" fill="#000"/></g>
<g transform="translate(2,305.5)"><rect x="0.5" y="0.5" width="33" height="33" fill="url(#gtool)" stroke="#9a9a9a" stroke-width="1.3"/><text x="17" y="27.5" text-anchor="middle" style="font-family:'Liberation Serif';font-size:27px" fill="#111">A</text></g>
<g transform="translate(37,305.5)"><rect x="0.5" y="0.5" width="33" height="33" fill="url(#gtool)" stroke="#9a9a9a" stroke-width="1.3"/><path d="M7,7 v16 M27,7 v16 M7,10 h20" fill="none" stroke="#222" stroke-width="1.2"/><path d="M7,10 l4,-2 v4 Z M27,10 l-4,-2 v4 Z" fill="#222"/><path d="M30,25 L30,30 L25,30 Z" fill="#000"/></g>
<g transform="translate(2,340.5)"><rect x="0.5" y="0.5" width="33" height="33" fill="url(#gtool)" stroke="#9a9a9a" stroke-width="1.3"/><rect x="7.5" y="8.5" width="19" height="15" fill="none" stroke="#111" stroke-width="2"/><path d="M9.5,21.5 L14,14 L18,18 L20.5,15.5 L24.5,21.5 Z" fill="#000"/><circle cx="22" cy="12" r="1.5" fill="#000"/></g>
<g transform="translate(2,383.5)"><rect x="0.5" y="0.5" width="33" height="33" fill="url(#gtool)" stroke="#9a9a9a" stroke-width="1.3"/><path d="M5,12.5 L5,31 L23.5,31 Z" fill="#fff" stroke="#111" stroke-width="1.3"/><path d="M9,22 L9,27 L14,27 Z" fill="none" stroke="#111" stroke-width="1.1"/><path d="M8.5,6.5 L11,4.2 L20,13 L20.5,16.5 L17,15.5 Z" fill="#d42020" stroke="#6a1010" stroke-width="0.6"/><path d="M26,4 L23.5,23 M26,4 L28.5,23" stroke="#222" stroke-width="1.1" fill="none"/><circle cx="26" cy="8" r="1" fill="#222"/><path d="M30,25 L30,30 L25,30 Z" fill="#000"/></g>
<g transform="translate(37,383.5)"><rect x="0.5" y="0.5" width="33" height="33" fill="url(#gtool)" stroke="#9a9a9a" stroke-width="1.3"/><rect x="5.5" y="13" width="24" height="8" rx="1" fill="#fafafa" stroke="#333" stroke-width="1.2"/><path d="M8,13 v2.5 M10.5,13 v2 M13,13 v3 M15.5,13 v2 M18,13 v3 M20.5,13 v2 M23,13 v3 M25.5,13 v2" stroke="#333" stroke-width="0.7"/></g>
<g transform="translate(2,418.5)"><rect x="0.5" y="0.5" width="33" height="33" fill="url(#gtool)" stroke="#9a9a9a" stroke-width="1.3"/><rect x="7" y="7" width="17" height="14" fill="#fbf0cc" stroke="#333" stroke-width="1"/><circle cx="20.3" cy="18.5" r="7" fill="#fbf0cc" fill-opacity="0.7" stroke="#333" stroke-width="1.1"/><circle cx="7" cy="21" r="1.5" fill="#f02020"/></g>
<g transform="translate(37,418.5)"><rect x="0.5" y="0.5" width="33" height="33" fill="url(#gtool)" stroke="#9a9a9a" stroke-width="1.3"/><line x1="5" y1="15" x2="22" y2="7" stroke="#e82020" stroke-width="1.4"/><path d="M14,12 L14,25 L17,22 L19.5,27 L21.5,26 L19,21 L23,21 Z" fill="#fff" stroke="#333" stroke-width="0.9"/><path d="M30,25 L30,30 L25,30 Z" fill="#000"/></g>
<g transform="translate(2,461)"><rect x="0.5" y="0.5" width="33" height="33" fill="url(#gtool)" stroke="#9a9a9a" stroke-width="1.3"/><path d="M6,13 L19,8 L28,13 L28,23 L15,28 L6,23 Z M6,13 L15,18 L28,13 M15,18 L15,28" fill="none" stroke="#222" stroke-width="1.2" stroke-linejoin="round"/><path d="M30,25 L30,30 L25,30 Z" fill="#000"/></g><path d="M79,115 L87,123 M87,115 L79,123" stroke="#666" stroke-width="1"/>
<circle cx="102" cy="119" r="5.6" fill="#f0f0f0" stroke="#1a3a90" stroke-width="1.8"/>
<path d="M100,117 L106,124" stroke="#e8a020" stroke-width="2"/><path d="M99,119 h6 M102,116 v6" stroke="#c03030" stroke-width="0.5"/>
<text x="633" y="124" text-anchor="middle" style="font-size:12px" fill="#1a1a1a">* birdhouse.dxf</text>
<defs><clipPath id="hr"><rect x="72" y="131" width="1068.5" height="24"/></clipPath></defs><g clip-path="url(#hr)">
<line x1="97.7" y1="148" x2="97.7" y2="155" stroke="#5a5a5a" stroke-width="1"/>
<text x="97.7" y="141" text-anchor="middle" style="font-size:9px" fill="#1a1a1a">80</text>
<line x1="120.4" y1="148" x2="120.4" y2="155" stroke="#5a5a5a" stroke-width="1"/>
<text x="120.4" y="141" text-anchor="middle" style="font-size:9px" fill="#1a1a1a">-70</text>
<line x1="143.1" y1="148" x2="143.1" y2="155" stroke="#5a5a5a" stroke-width="1"/>
<text x="143.1" y="141" text-anchor="middle" style="font-size:9px" fill="#1a1a1a">-60</text>
<line x1="165.8" y1="148" x2="165.8" y2="155" stroke="#5a5a5a" stroke-width="1"/>
<text x="165.8" y="141" text-anchor="middle" style="font-size:9px" fill="#1a1a1a">-50</text>
<line x1="188.6" y1="148" x2="188.6" y2="155" stroke="#5a5a5a" stroke-width="1"/>
<text x="188.6" y="141" text-anchor="middle" style="font-size:9px" fill="#1a1a1a">-40</text>
<line x1="211.3" y1="148" x2="211.3" y2="155" stroke="#5a5a5a" stroke-width="1"/>
<text x="211.3" y="141" text-anchor="middle" style="font-size:9px" fill="#1a1a1a">-30</text>
<line x1="234.0" y1="148" x2="234.0" y2="155" stroke="#5a5a5a" stroke-width="1"/>
<text x="234.0" y="141" text-anchor="middle" style="font-size:9px" fill="#1a1a1a">-20</text>
<line x1="256.8" y1="148" x2="256.8" y2="155" stroke="#5a5a5a" stroke-width="1"/>
<text x="256.8" y="141" text-anchor="middle" style="font-size:9px" fill="#1a1a1a">-10</text>
<line x1="279.5" y1="148" x2="279.5" y2="155" stroke="#5a5a5a" stroke-width="1"/>
<text x="279.5" y="141" text-anchor="middle" style="font-size:9px" fill="#1a1a1a">0</text>
<line x1="302.2" y1="148" x2="302.2" y2="155" stroke="#5a5a5a" stroke-width="1"/>
<text x="302.2" y="141" text-anchor="middle" style="font-size:9px" fill="#1a1a1a">10</text>
<line x1="325.0" y1="148" x2="325.0" y2="155" stroke="#5a5a5a" stroke-width="1"/>
<text x="325.0" y="141" text-anchor="middle" style="font-size:9px" fill="#1a1a1a">20</text>
<line x1="347.7" y1="148" x2="347.7" y2="155" stroke="#5a5a5a" stroke-width="1"/>
<text x="347.7" y="141" text-anchor="middle" style="font-size:9px" fill="#1a1a1a">30</text>
<line x1="370.4" y1="148" x2="370.4" y2="155" stroke="#5a5a5a" stroke-width="1"/>
<text x="370.4" y="141" text-anchor="middle" style="font-size:9px" fill="#1a1a1a">40</text>
<line x1="393.1" y1="148" x2="393.1" y2="155" stroke="#5a5a5a" stroke-width="1"/>
<text x="393.1" y="141" text-anchor="middle" style="font-size:9px" fill="#1a1a1a">50</text>
<line x1="415.9" y1="148" x2="415.9" y2="155" stroke="#5a5a5a" stroke-width="1"/>
<text x="415.9" y="141" text-anchor="middle" style="font-size:9px" fill="#1a1a1a">60</text>
<line x1="438.6" y1="148" x2="438.6" y2="155" stroke="#5a5a5a" stroke-width="1"/>
<text x="438.6" y="141" text-anchor="middle" style="font-size:9px" fill="#1a1a1a">70</text>
<line x1="461.3" y1="148" x2="461.3" y2="155" stroke="#5a5a5a" stroke-width="1"/>
<text x="461.3" y="141" text-anchor="middle" style="font-size:9px" fill="#1a1a1a">80</text>
<line x1="484.1" y1="148" x2="484.1" y2="155" stroke="#5a5a5a" stroke-width="1"/>
<text x="484.1" y="141" text-anchor="middle" style="font-size:9px" fill="#1a1a1a">90</text>
<line x1="506.8" y1="148" x2="506.8" y2="155" stroke="#5a5a5a" stroke-width="1"/>
<text x="506.8" y="141" text-anchor="middle" style="font-size:9px" fill="#1a1a1a">100</text>
<line x1="529.5" y1="148" x2="529.5" y2="155" stroke="#5a5a5a" stroke-width="1"/>
<text x="529.5" y="141" text-anchor="middle" style="font-size:9px" fill="#1a1a1a">110</text>
<line x1="552.3" y1="148" x2="552.3" y2="155" stroke="#5a5a5a" stroke-width="1"/>
<text x="552.3" y="141" text-anchor="middle" style="font-size:9px" fill="#1a1a1a">120</text>
<line x1="575.0" y1="148" x2="575.0" y2="155" stroke="#5a5a5a" stroke-width="1"/>
<text x="575.0" y="141" text-anchor="middle" style="font-size:9px" fill="#1a1a1a">130</text>
<line x1="597.7" y1="148" x2="597.7" y2="155" stroke="#5a5a5a" stroke-width="1"/>
<text x="597.7" y="141" text-anchor="middle" style="font-size:9px" fill="#1a1a1a">140</text>
<line x1="620.5" y1="148" x2="620.5" y2="155" stroke="#5a5a5a" stroke-width="1"/>
<text x="620.5" y="141" text-anchor="middle" style="font-size:9px" fill="#1a1a1a">150</text>
<line x1="643.2" y1="148" x2="643.2" y2="155" stroke="#5a5a5a" stroke-width="1"/>
<text x="643.2" y="141" text-anchor="middle" style="font-size:9px" fill="#1a1a1a">160</text>
<line x1="665.9" y1="148" x2="665.9" y2="155" stroke="#5a5a5a" stroke-width="1"/>
<text x="665.9" y="141" text-anchor="middle" style="font-size:9px" fill="#1a1a1a">170</text>
<line x1="688.6" y1="148" x2="688.6" y2="155" stroke="#5a5a5a" stroke-width="1"/>
<text x="688.6" y="141" text-anchor="middle" style="font-size:9px" fill="#1a1a1a">180</text>
<line x1="711.4" y1="148" x2="711.4" y2="155" stroke="#5a5a5a" stroke-width="1"/>
<text x="711.4" y="141" text-anchor="middle" style="font-size:9px" fill="#1a1a1a">190</text>
<line x1="734.1" y1="148" x2="734.1" y2="155" stroke="#5a5a5a" stroke-width="1"/>
<text x="734.1" y="141" text-anchor="middle" style="font-size:9px" fill="#1a1a1a">200</text>
<line x1="756.8" y1="148" x2="756.8" y2="155" stroke="#5a5a5a" stroke-width="1"/>
<text x="756.8" y="141" text-anchor="middle" style="font-size:9px" fill="#1a1a1a">210</text>
<line x1="779.6" y1="148" x2="779.6" y2="155" stroke="#5a5a5a" stroke-width="1"/>
<text x="779.6" y="141" text-anchor="middle" style="font-size:9px" fill="#1a1a1a">220</text>
<line x1="802.3" y1="148" x2="802.3" y2="155" stroke="#5a5a5a" stroke-width="1"/>
<text x="802.3" y="141" text-anchor="middle" style="font-size:9px" fill="#1a1a1a">230</text>
<line x1="825.0" y1="148" x2="825.0" y2="155" stroke="#5a5a5a" stroke-width="1"/>
<text x="825.0" y="141" text-anchor="middle" style="font-size:9px" fill="#1a1a1a">240</text>
<line x1="847.8" y1="148" x2="847.8" y2="155" stroke="#5a5a5a" stroke-width="1"/>
<text x="847.8" y="141" text-anchor="middle" style="font-size:9px" fill="#1a1a1a">250</text>
<line x1="870.5" y1="148" x2="870.5" y2="155" stroke="#5a5a5a" stroke-width="1"/>
<text x="870.5" y="141" text-anchor="middle" style="font-size:9px" fill="#1a1a1a">260</text>
<line x1="893.2" y1="148" x2="893.2" y2="155" stroke="#5a5a5a" stroke-width="1"/>
<text x="893.2" y="141" text-anchor="middle" style="font-size:9px" fill="#1a1a1a">270</text>
<line x1="915.9" y1="148" x2="915.9" y2="155" stroke="#5a5a5a" stroke-width="1"/>
<text x="915.9" y="141" text-anchor="middle" style="font-size:9px" fill="#1a1a1a">280</text>
<line x1="938.7" y1="148" x2="938.7" y2="155" stroke="#5a5a5a" stroke-width="1"/>
<text x="938.7" y="141" text-anchor="middle" style="font-size:9px" fill="#1a1a1a">290</text>
<line x1="961.4" y1="148" x2="961.4" y2="155" stroke="#5a5a5a" stroke-width="1"/>
<text x="961.4" y="141" text-anchor="middle" style="font-size:9px" fill="#1a1a1a">300</text>
<line x1="984.1" y1="148" x2="984.1" y2="155" stroke="#5a5a5a" stroke-width="1"/>
<text x="984.1" y="141" text-anchor="middle" style="font-size:9px" fill="#1a1a1a">310</text>
<line x1="1006.9" y1="148" x2="1006.9" y2="155" stroke="#5a5a5a" stroke-width="1"/>
<text x="1006.9" y="141" text-anchor="middle" style="font-size:9px" fill="#1a1a1a">320</text>
<line x1="1029.6" y1="148" x2="1029.6" y2="155" stroke="#5a5a5a" stroke-width="1"/>
<text x="1029.6" y="141" text-anchor="middle" style="font-size:9px" fill="#1a1a1a">330</text>
<line x1="1052.3" y1="148" x2="1052.3" y2="155" stroke="#5a5a5a" stroke-width="1"/>
<text x="1052.3" y="141" text-anchor="middle" style="font-size:9px" fill="#1a1a1a">340</text>
<line x1="1075.1" y1="148" x2="1075.1" y2="155" stroke="#5a5a5a" stroke-width="1"/>
<text x="1075.1" y="141" text-anchor="middle" style="font-size:9px" fill="#1a1a1a">350</text>
<line x1="1097.8" y1="148" x2="1097.8" y2="155" stroke="#5a5a5a" stroke-width="1"/>
<text x="1097.8" y="141" text-anchor="middle" style="font-size:9px" fill="#1a1a1a">360</text>
<line x1="1120.5" y1="148" x2="1120.5" y2="155" stroke="#5a5a5a" stroke-width="1"/>
<text x="1120.5" y="141" text-anchor="middle" style="font-size:9px" fill="#1a1a1a">370</text>
<text x="1143.2" y="141" text-anchor="middle" style="font-size:9px" fill="#1a1a1a">380</text>
</g>
<line x1="88" y1="727.4" x2="95" y2="727.4" stroke="#5a5a5a" stroke-width="1"/>
<text transform="translate(81.3,727.4) rotate(-90)" x="0" y="0" text-anchor="middle" style="font-size:9px" fill="#1a1a1a">-20</text>
<line x1="88" y1="704.6" x2="95" y2="704.6" stroke="#5a5a5a" stroke-width="1"/>
<text transform="translate(81.3,704.6) rotate(-90)" x="0" y="0" text-anchor="middle" style="font-size:9px" fill="#1a1a1a">-10</text>
<line x1="88" y1="681.9" x2="95" y2="681.9" stroke="#5a5a5a" stroke-width="1"/>
<text transform="translate(81.3,681.9) rotate(-90)" x="0" y="0" text-anchor="middle" style="font-size:9px" fill="#1a1a1a">0</text>
<line x1="88" y1="659.2" x2="95" y2="659.2" stroke="#5a5a5a" stroke-width="1"/>
<text transform="translate(81.3,659.2) rotate(-90)" x="0" y="0" text-anchor="middle" style="font-size:9px" fill="#1a1a1a">10</text>
<line x1="88" y1="636.4" x2="95" y2="636.4" stroke="#5a5a5a" stroke-width="1"/>
<text transform="translate(81.3,636.4) rotate(-90)" x="0" y="0" text-anchor="middle" style="font-size:9px" fill="#1a1a1a">20</text>
<line x1="88" y1="613.7" x2="95" y2="613.7" stroke="#5a5a5a" stroke-width="1"/>
<text transform="translate(81.3,613.7) rotate(-90)" x="0" y="0" text-anchor="middle" style="font-size:9px" fill="#1a1a1a">30</text>
<line x1="88" y1="591.0" x2="95" y2="591.0" stroke="#5a5a5a" stroke-width="1"/>
<text transform="translate(81.3,591.0) rotate(-90)" x="0" y="0" text-anchor="middle" style="font-size:9px" fill="#1a1a1a">40</text>
<line x1="88" y1="568.2" x2="95" y2="568.2" stroke="#5a5a5a" stroke-width="1"/>
<text transform="translate(81.3,568.2) rotate(-90)" x="0" y="0" text-anchor="middle" style="font-size:9px" fill="#1a1a1a">50</text>
<line x1="88" y1="545.5" x2="95" y2="545.5" stroke="#5a5a5a" stroke-width="1"/>
<text transform="translate(81.3,545.5) rotate(-90)" x="0" y="0" text-anchor="middle" style="font-size:9px" fill="#1a1a1a">60</text>
<line x1="88" y1="522.8" x2="95" y2="522.8" stroke="#5a5a5a" stroke-width="1"/>
<text transform="translate(81.3,522.8) rotate(-90)" x="0" y="0" text-anchor="middle" style="font-size:9px" fill="#1a1a1a">70</text>
<line x1="88" y1="500.1" x2="95" y2="500.1" stroke="#5a5a5a" stroke-width="1"/>
<text transform="translate(81.3,500.1) rotate(-90)" x="0" y="0" text-anchor="middle" style="font-size:9px" fill="#1a1a1a">80</text>
<line x1="88" y1="477.3" x2="95" y2="477.3" stroke="#5a5a5a" stroke-width="1"/>
<text transform="translate(81.3,477.3) rotate(-90)" x="0" y="0" text-anchor="middle" style="font-size:9px" fill="#1a1a1a">90</text>
<line x1="88" y1="454.6" x2="95" y2="454.6" stroke="#5a5a5a" stroke-width="1"/>
<text transform="translate(81.3,454.6) rotate(-90)" x="0" y="0" text-anchor="middle" style="font-size:9px" fill="#1a1a1a">100</text>
<line x1="88" y1="431.9" x2="95" y2="431.9" stroke="#5a5a5a" stroke-width="1"/>
<text transform="translate(81.3,431.9) rotate(-90)" x="0" y="0" text-anchor="middle" style="font-size:9px" fill="#1a1a1a">110</text>
<line x1="88" y1="409.1" x2="95" y2="409.1" stroke="#5a5a5a" stroke-width="1"/>
<text transform="translate(81.3,409.1) rotate(-90)" x="0" y="0" text-anchor="middle" style="font-size:9px" fill="#1a1a1a">120</text>
<line x1="88" y1="386.4" x2="95" y2="386.4" stroke="#5a5a5a" stroke-width="1"/>
<text transform="translate(81.3,386.4) rotate(-90)" x="0" y="0" text-anchor="middle" style="font-size:9px" fill="#1a1a1a">130</text>
<line x1="88" y1="363.7" x2="95" y2="363.7" stroke="#5a5a5a" stroke-width="1"/>
<text transform="translate(81.3,363.7) rotate(-90)" x="0" y="0" text-anchor="middle" style="font-size:9px" fill="#1a1a1a">140</text>
<line x1="88" y1="340.9" x2="95" y2="340.9" stroke="#5a5a5a" stroke-width="1"/>
<text transform="translate(81.3,340.9) rotate(-90)" x="0" y="0" text-anchor="middle" style="font-size:9px" fill="#1a1a1a">150</text>
<line x1="88" y1="318.2" x2="95" y2="318.2" stroke="#5a5a5a" stroke-width="1"/>
<text transform="translate(81.3,318.2) rotate(-90)" x="0" y="0" text-anchor="middle" style="font-size:9px" fill="#1a1a1a">160</text>
<line x1="88" y1="295.5" x2="95" y2="295.5" stroke="#5a5a5a" stroke-width="1"/>
<text transform="translate(81.3,295.5) rotate(-90)" x="0" y="0" text-anchor="middle" style="font-size:9px" fill="#1a1a1a">170</text>
<line x1="88" y1="272.8" x2="95" y2="272.8" stroke="#5a5a5a" stroke-width="1"/>
<text transform="translate(81.3,272.8) rotate(-90)" x="0" y="0" text-anchor="middle" style="font-size:9px" fill="#1a1a1a">180</text>
<line x1="88" y1="250.0" x2="95" y2="250.0" stroke="#5a5a5a" stroke-width="1"/>
<text transform="translate(81.3,250.0) rotate(-90)" x="0" y="0" text-anchor="middle" style="font-size:9px" fill="#1a1a1a">190</text>
<line x1="88" y1="227.3" x2="95" y2="227.3" stroke="#5a5a5a" stroke-width="1"/>
<text transform="translate(81.3,227.3) rotate(-90)" x="0" y="0" text-anchor="middle" style="font-size:9px" fill="#1a1a1a">200</text>
<line x1="88" y1="204.6" x2="95" y2="204.6" stroke="#5a5a5a" stroke-width="1"/>
<text transform="translate(81.3,204.6) rotate(-90)" x="0" y="0" text-anchor="middle" style="font-size:9px" fill="#1a1a1a">210</text>
<line x1="88" y1="181.8" x2="95" y2="181.8" stroke="#5a5a5a" stroke-width="1"/>
<text transform="translate(81.3,181.8) rotate(-90)" x="0" y="0" text-anchor="middle" style="font-size:9px" fill="#1a1a1a">220</text>
<line x1="88" y1="159.1" x2="95" y2="159.1" stroke="#5a5a5a" stroke-width="1"/>
<text transform="translate(81.3,159.1) rotate(-90)" x="0" y="0" text-anchor="middle" style="font-size:9px" fill="#1a1a1a">230</text>
<rect x="72" y="150" width="16" height="5" fill="#ececec"/>
<path d="M466,145 L478,145 L472,151 Z" fill="#000"/>
<path d="M85,404 L91,409.3 L85,414.5 Z" fill="#000"/>
<defs><clipPath id="cv"><rect x="95" y="155" width="1044" height="577"/></clipPath>
<pattern id="gdots" x="279.00" y="681.40" width="22.730" height="22.730" patternUnits="userSpaceOnUse"><rect x="0" y="0" width="1" height="1" fill="#e6e6e6"/></pattern></defs>
<g clip-path="url(#cv)">
<rect x="95" y="155" width="1044" height="577" fill="url(#gdots)"/>
<rect x="955.3" y="214.5" width="8.6" height="476.8" fill="#878787"/>
<rect x="289" y="683" width="674.9" height="8.3" fill="#878787"/>
<rect x="280" y="205" width="674.5" height="477.5" fill="#c8c8c8"/>
<rect x="281" y="206" width="672.3" height="475.2" fill="#fff"/>
<line x1="506.8" y1="155" x2="506.8" y2="732" stroke="#000" stroke-opacity="0.035" stroke-width="1"/>
<line x1="734.1" y1="155" x2="734.1" y2="732" stroke="#000" stroke-opacity="0.035" stroke-width="1"/>
<line x1="961.4" y1="155" x2="961.4" y2="732" stroke="#000" stroke-opacity="0.035" stroke-width="1"/>
<line x1="95" y1="681.9" x2="1139" y2="681.9" stroke="#000" stroke-opacity="0.035" stroke-width="1"/>
<line x1="95" y1="454.6" x2="1139" y2="454.6" stroke="#000" stroke-opacity="0.035" stroke-width="1"/>
<line x1="95" y1="227.3" x2="1139" y2="227.3" stroke="#000" stroke-opacity="0.035" stroke-width="1"/>
<rect x="302.5" y="227.7" width="629" height="431.6" fill="none" stroke="#3636a4" stroke-width="1.8"/>
<rect x="302.5" y="227.7" width="629" height="431.6" fill="none" stroke="#7070e0" stroke-opacity="0.25" stroke-width="2.8"/>
<path d="M437.5,310.9 L437.5,290.5 A14.65,14.65 0 0 1 466.8,290.5 L466.8,310.9" fill="none" stroke="#555" stroke-width="0.9"/>
<circle cx="452" cy="290.9" r="3.6" fill="none" stroke="#555" stroke-width="0.9"/>
<path d="M449.9,301.1 L326.2,400.6 L328.5,403.7 L452.0,304.4 Z" fill="#fff" stroke="#555" stroke-width="0.9" stroke-linejoin="round"/>
<path d="M454.1,301.1 L577.6,400.6 L575.4,403.7 L452.0,304.4 Z" fill="#fff" stroke="#555" stroke-width="0.9" stroke-linejoin="round"/>
<path d="M390.5,346.5 L408.5,332.3 L409.5,333.5" fill="none" stroke="#777" stroke-width="0.7" stroke-linejoin="round"/>
<path d="M495.5,332.3 L513.5,346.5" fill="none" stroke="#777" stroke-width="0.7" stroke-linejoin="round"/>
<path d="M494.5,333.5 L495.5,332.3" fill="none" stroke="#777" stroke-width="0.7" stroke-linejoin="round"/>
<path d="M361.0,377.4 L379.7,486.3" fill="none" stroke="#555" stroke-width="0.9" stroke-linejoin="round"/>
<path d="M542.4,377.4 L524.4,486.3" fill="none" stroke="#555" stroke-width="0.9" stroke-linejoin="round"/>
<rect x="327" y="486.5" width="250.3" height="14.8" fill="none" stroke="#555" stroke-width="0.9"/>
<path d="M327.0,498.8 L577.3,498.8" fill="none" stroke="#555" stroke-width="0.9" stroke-linejoin="round"/>
<path d="M451.8,486.5 L451.8,501.3" fill="none" stroke="#555" stroke-width="1.2" stroke-linejoin="round"/>
<path d="M382.6,501.3 L384,511 Q384.5,513.2 387,513.2 L517,513.2 Q519.5,513.2 520,511 L521.4,501.3" fill="none" stroke="#555" stroke-width="0.9"/>
<circle cx="452.2" cy="395.1" r="32" fill="none" stroke="#555" stroke-width="0.9"/>
<path d="M420.3,397.6 L447.0,410.4 L445.4,411.8" fill="none" stroke="#555" stroke-width="0.9" stroke-linejoin="round"/>
<path d="M420.3,400.9 L461.2,425.8" fill="none" stroke="#555" stroke-width="0.9" stroke-linejoin="round"/>
<path d="M420.6,398.2 L420.6,400.4" stroke="#fff" stroke-width="1.5"/>
<path d="M455.9,374.6 L452.8,377.2 L451.3,383.0 L457.0,386.8 L461.0,390.0 L476.6,415.3" fill="none" stroke="#555" stroke-width="0.9" stroke-linejoin="round"/>
<path d="M450.8,374.2 Q447,371.6 442,372.4 Q437.6,373.6 436.7,378.6 L436,384.5 Q434,390 434.6,397.5 Q436,403 440,405.6 L447.2,409.6" fill="none" stroke="#555" stroke-width="0.9"/>
<path d="M450.8,374.2 L455.9,374.6" fill="none" stroke="#555" stroke-width="0.9" stroke-linejoin="round"/>
<path d="M455.4,412.2 L460.3,409.4 L468.3,413.1 L474.1,417.6 L466.1,423.8 L455.0,416.7 L455.4,412.2" fill="none" stroke="#555" stroke-width="0.9" stroke-linejoin="round"/>
<ellipse cx="451" cy="412.5" rx="1.8" ry="2.2" fill="none" stroke="#555" stroke-width="0.8"/>
<circle cx="461.4" cy="303.9" r="4.9" fill="#0000aa"/>
<circle cx="461.4" cy="386.9" r="4.9" fill="#0000aa"/>
<rect x="303" y="221.4" width="316.5" height="330.5" fill="none" stroke="#a86a6a" stroke-width="0.9" stroke-dasharray="4 2 1 2"/>
<rect x="298" y="216.29999999999998" width="10" height="9.8" fill="#0000aa"/>
<rect x="614.7" y="216.29999999999998" width="10" height="9.8" fill="#0000aa"/>
<rect x="298" y="547.0" width="10" height="9.8" fill="#0000aa"/>
<rect x="614.7" y="547.0" width="10" height="9.8" fill="#0000aa"/>
<rect x="647.5" y="284.3" width="264.5" height="250.1" fill="none" stroke="#ff44ff" stroke-opacity="0.85" stroke-width="0.9" stroke-dasharray="5 2 1 2"/>
<path d="M681.5,440.0 L799.3,506.4 L895.6,452.8 L895.6,460.8 L799.3,516.0 L681.5,448.8 L681.5,440.0" fill="#fff" stroke="#555" stroke-width="0.9" stroke-linejoin="round"/>
<path d="M681.5,440.0 L707.6,426.4" fill="none" stroke="#555" stroke-width="0.9" stroke-linejoin="round"/>
<path d="M684.5,441.0 L708.0,429.5" fill="none" stroke="#555" stroke-width="0.7" stroke-linejoin="round"/>
<path d="M895.6,452.8 L866.8,437.6" fill="none" stroke="#555" stroke-width="0.9" stroke-linejoin="round"/>
<path d="M892.0,453.0 L866.0,440.5" fill="none" stroke="#555" stroke-width="0.7" stroke-linejoin="round"/>
<path d="M681.5,444.5 L799.3,511.0 L895.6,456.8" fill="none" stroke="#555" stroke-width="0.7" stroke-linejoin="round"/>
<path d="M687.0,442.0 L799.3,504.5" fill="none" stroke="#555" stroke-width="0.7" stroke-linejoin="round"/>
<path d="M799.3,504.5 L890.0,454.0" fill="none" stroke="#555" stroke-width="0.7" stroke-linejoin="round"/>
<path d="M740.4,473.0 L740.4,482.4" fill="none" stroke="#555" stroke-width="0.8" stroke-linejoin="round"/>
<path d="M799.3,506.4 L799.3,516.0" fill="none" stroke="#555" stroke-width="0.8" stroke-linejoin="round"/>
<path d="M801.5,505.5 L801.5,515.0" fill="none" stroke="#555" stroke-width="0.6" stroke-linejoin="round"/>
<path d="M702.3,387.7 L711.9,454.4" fill="none" stroke="#555" stroke-width="0.9" stroke-linejoin="round"/>
<path d="M788.4,444.8 L780.4,494.4" fill="none" stroke="#555" stroke-width="0.9" stroke-linejoin="round"/>
<path d="M790.6,445.0 L782.6,494.4" fill="none" stroke="#555" stroke-width="0.7" stroke-linejoin="round"/>
<path d="M867.6,423.2 L862.8,447.2" fill="none" stroke="#555" stroke-width="0.9" stroke-linejoin="round"/>
<path d="M869.8,423.2 L865.0,447.2" fill="none" stroke="#555" stroke-width="0.7" stroke-linejoin="round"/>
<path d="M842.8,436.8 L861.5,447.0" fill="none" stroke="#555" stroke-width="0.8" stroke-linejoin="round"/>
<ellipse cx="745.5" cy="421.4" rx="14.2" ry="20" transform="rotate(-20 745.5 421.4)" fill="#fff" stroke="#333" stroke-width="1"/>
<ellipse cx="745.1" cy="421.6" rx="12.6" ry="18.6" transform="rotate(-20 745.1 421.6)" fill="none" stroke="#555" stroke-width="0.7"/>
<ellipse cx="747.2" cy="420.3" rx="8.2" ry="15.4" transform="rotate(-20 747.2 420.3)" fill="none" stroke="#444" stroke-width="0.9"/>
<path d="M751.5,409 L754,409.5 L758,427 L755.5,428 Z" fill="none" stroke="#444" stroke-width="0.8"/>
<path d="M733.5,414 L738,426 L746,436 M735,419 L741,431 L749,437 M740,428 L747,432 L752,439" fill="none" stroke="#333" stroke-width="1.1"/>
<path d="M680.3,393.0 L737.8,360.4" fill="none" stroke="#555" stroke-width="0.9" stroke-linejoin="round"/>
<path d="M747.9,354.5 L781.6,334.4 L822.0,321.3" fill="none" stroke="#555" stroke-width="0.9" stroke-linejoin="round"/>
<path d="M681.5,394.8 L739.6,372.3" fill="none" stroke="#555" stroke-width="0.9" stroke-linejoin="round"/>
<path d="M680.5,394.0 L739.0,370.5" fill="none" stroke="#555" stroke-width="0.6" stroke-linejoin="round"/>
<path d="M718.0,377.0 L726.0,374.5" fill="none" stroke="#888" stroke-width="1.6" stroke-linejoin="round"/>
<path d="M812.0,325.0 L820.0,322.5" fill="none" stroke="#888" stroke-width="1.6" stroke-linejoin="round"/>
<path d="M754.4,364.6 L828.4,321.3" fill="none" stroke="#555" stroke-width="0.9" stroke-linejoin="round"/>
<path d="M753.0,367.0 L830.0,322.8" fill="none" stroke="#555" stroke-width="0.7" stroke-linejoin="round"/>
<path d="M838.3,319.2 L895.9,405.2 L798.8,461.6 L741.0,373.5" fill="none" stroke="#555" stroke-width="0.9" stroke-linejoin="round"/>
<path d="M743.0,372.5 L799.5,458.5" fill="none" stroke="#555" stroke-width="0.7" stroke-linejoin="round"/>
<path d="M849.7,353.5 L852,351.9 L859.7,361.7 L857.4,363.3 Z" fill="none" stroke="#555" stroke-width="0.8"/>
<path d="M766.8,399.0 L774.8,410.2" fill="none" stroke="#555" stroke-width="0.8" stroke-linejoin="round"/>
<path d="M768.8,398.4 L776.6,409.2" fill="none" stroke="#555" stroke-width="0.6" stroke-linejoin="round"/>
<path d="M742.5,354 A6.6,6.6 0 0 1 754.2,361.5 L754.2,378.6 L745,370.6 L738.7,370.6 L738.7,360.2 A6.4,6.4 0 0 1 742.5,354 Z" fill="#fff" stroke="#444" stroke-width="0.9"/>
<path d="M738.7,360.2 A6.4,6.4 0 0 1 751.4,360.2 L751.4,367" fill="none" stroke="#444" stroke-width="0.8"/>
<ellipse cx="745.2" cy="364.5" rx="1.7" ry="2.3" fill="none" stroke="#222" stroke-width="1"/>
<path d="M826,306.5 A6.6,6.6 0 0 1 838,313.5 L838,329.1 L829.3,322 L822,321.3 L822,312.8 A6.4,6.4 0 0 1 826,306.5 Z" fill="#fff" stroke="#444" stroke-width="0.9"/>
<path d="M822,312.8 A6.4,6.4 0 0 1 835,312.8 L835,319" fill="none" stroke="#444" stroke-width="0.8"/>
<ellipse cx="828.8" cy="316.3" rx="1.7" ry="2.3" fill="none" stroke="#222" stroke-width="1"/>
<circle cx="779.6" cy="409.6" r="5" fill="none" stroke="#e02020" stroke-width="0.9"/>
<path d="M773.6,409.6 h12 M779.6,403.6 v12" stroke="#e02020" stroke-width="0.8"/>
<line x1="545.6" y1="577.6" x2="931.6" y2="577.6" stroke="#505050" stroke-width="1"/>
<line x1="545.6" y1="591" x2="931.6" y2="591" stroke="#505050" stroke-width="1"/>
<line x1="545.6" y1="613.3" x2="931.6" y2="613.3" stroke="#505050" stroke-width="1"/>
<line x1="715.7" y1="636.3" x2="931.6" y2="636.3" stroke="#505050" stroke-width="1"/>
<line x1="545.6" y1="577.6" x2="545.6" y2="659.3" stroke="#505050" stroke-width="1"/>
<line x1="579.3" y1="577.6" x2="579.3" y2="591" stroke="#505050" stroke-width="1"/>
<line x1="618.4" y1="577.6" x2="618.4" y2="613.3" stroke="#505050" stroke-width="1"/>
<line x1="674.4" y1="591" x2="674.4" y2="613.3" stroke="#505050" stroke-width="1"/>
<line x1="761.6" y1="591" x2="761.6" y2="613.3" stroke="#505050" stroke-width="1"/>
<line x1="818.3" y1="577.6" x2="818.3" y2="613.3" stroke="#505050" stroke-width="1"/>
<line x1="886.4" y1="591" x2="886.4" y2="613.3" stroke="#505050" stroke-width="1"/>
<line x1="715.7" y1="613.3" x2="715.7" y2="659.3" stroke="#505050" stroke-width="1"/>
<line x1="852.4" y1="636.3" x2="852.4" y2="659.3" stroke="#505050" stroke-width="1"/>
<line x1="886.4" y1="636.3" x2="886.4" y2="659.3" stroke="#505050" stroke-width="1"/>
<text x="548.7" y="586.7" text-anchor="start" style="font-size:5.8px" fill="#1a1a1a">Item ref</text>
<text x="582.7" y="586.7" text-anchor="start" style="font-size:5.7px" fill="#1a1a1a">Quantity</text>
<text x="621.8" y="586.7" text-anchor="start" style="font-size:5.75px" fill="#1a1a1a">Title/Name, destination, material, dimension etc</text>
<text x="822.7" y="586.7" text-anchor="start" style="font-size:5.6px" fill="#1a1a1a">Article No./Reference</text>
<text x="548.7" y="598.7" text-anchor="start" style="font-size:5.75px" fill="#1a1a1a">Designed by</text>
<text x="621.6" y="598.7" text-anchor="start" style="font-size:5.6px" fill="#1a1a1a">Checked by</text>
<text x="689" y="598.7" text-anchor="start" style="font-size:5.7px" fill="#1a1a1a">Approved by - date</text>
<text x="768" y="598.7" text-anchor="start" style="font-size:5.6px" fill="#1a1a1a">Filename</text>
<text x="810.7" y="609.7" text-anchor="end" style="font-size:6.2px" fill="#1a1a1a">file.dxf</text>
<text x="821.6" y="598.7" text-anchor="start" style="font-size:5.4px" fill="#1a1a1a">Date</text>
<text x="879.3" y="609.7" text-anchor="end" style="font-size:10.2px" fill="#1a1a1a" textLength="47.3" lengthAdjust="spacingAndGlyphs">01/01/2025</text>
<text x="890" y="598.7" text-anchor="start" style="font-size:5.7px" fill="#1a1a1a">Scale</text>
<text x="925" y="609.7" text-anchor="end" style="font-size:10.2px" fill="#1a1a1a" textLength="12.3" lengthAdjust="spacingAndGlyphs">1:2</text>
<text x="929.6" y="631.6" text-anchor="end" style="font-size:15.8px" fill="#1a1a1a">Aperçu de la maison d'oiseau</text>
<text x="856" y="644.7" text-anchor="start" style="font-size:5.6px" fill="#1a1a1a">Edition</text>
<text x="891.7" y="644.7" text-anchor="start" style="font-size:5.7px" fill="#1a1a1a">Sheet</text>
<text x="925" y="654.7" text-anchor="end" style="font-size:10.2px" fill="#1a1a1a" textLength="13" lengthAdjust="spacingAndGlyphs">2/2</text>
<path d="M259,681.9 h41 M279.4,661.7 v40.3" stroke="#e04848" stroke-opacity="0.8" stroke-width="1.3"/>
<defs><radialGradient id="ring" cx="984.8" cy="652.8" r="40" gradientUnits="userSpaceOnUse"><stop offset="0" stop-color="#8aa4c0" stop-opacity="0"/><stop offset="0.76" stop-color="#8aa4c0" stop-opacity="0"/><stop offset="0.84" stop-color="#9ab0c8" stop-opacity="0.35"/><stop offset="0.9" stop-color="#8aa4c0" stop-opacity="0.6"/><stop offset="0.96" stop-color="#8aa4c0" stop-opacity="0.65"/><stop offset="1" stop-color="#8aa4c0" stop-opacity="0"/></radialGradient></defs>
<circle cx="984.8" cy="652.8" r="40" fill="url(#ring)"/>
<path transform="translate(985.5,653) scale(1.5)" d="M0,0 L0,15.5 L3.6,12.3 L6.4,18.4 L9,17.3 L6.3,11.3 L11,11.3 Z" fill="#fff" stroke="#000" stroke-width="0.9" stroke-linejoin="round"/>
</g>
<rect x="1143" y="313" width="8" height="264" rx="4" fill="#828282"/>
<rect x="231" y="736" width="717" height="8" rx="4" fill="#828282"/>
<text x="1153" y="745" text-anchor="end" style="font-size:13px" fill="#111">10 &lt; 100</text>
<rect x="1142" y="750.5" width="8" height="16.5" rx="4" fill="#8a8a8a"/>
<text x="77" y="762.5" style="font-size:13px" fill="#1212c8"><tspan style="font-style:italic">Commande:</tspan> vt</text>
<text x="73" y="790" style="font-size:13.4px" fill="#111">Commande :</text>
<rect x="1127.5" y="772.5" width="25.5" height="25" fill="#efefef" stroke="#b8b8b8" stroke-width="1"/>
<rect x="1133" y="780" width="14" height="10.5" fill="#fff" stroke="#222" stroke-width="1"/><rect x="1133" y="780" width="14" height="2.5" fill="#111"/><circle cx="1164" cy="118" r="7" fill="#6c6c6c"/><path d="M1161,115 L1167,121 M1167,115 L1161,121" stroke="#f0f0f0" stroke-width="1.8"/><circle cx="1182" cy="118" r="7" fill="#6c6c6c"/><rect x="1180.2" y="114" width="5.5" height="4.5" fill="none" stroke="#f0f0f0" stroke-width="1.2"/><rect x="1178" y="116.5" width="5.5" height="4.5" fill="#6c6c6c" stroke="#f0f0f0" stroke-width="1.2"/>
<text x="1322.5" y="123" text-anchor="middle" style="font-size:11.8px" fill="#3a3a3a">Liste des blocs</text>
<g transform="translate(1174,143) scale(1)"><path d="M-7.5,0.5 Q-4,-6 1,-5.5 Q6,-5.2 8,0 Q5,5.5 0,5.5 Q-5,5.5 -7.5,0.5 Z" fill="#000"/><path d="M-5,0.3 Q-2,-3.3 1,-3.2 Q4,-3 5,0 Q3,3.2 0,3.3 Q-3,3.2 -5,0.3 Z" fill="#fff"/><circle cx="0.3" cy="0" r="2.4" fill="#000"/><circle cx="-0.5" cy="-1" r="0.6" fill="#fff"/></g>
<g transform="translate(1211,143) scale(1)"><path d="M-7.5,0.5 Q-4,-6 1,-5.5 Q6,-5.2 8,0 Q5,5.5 0,5.5 Q-5,5.5 -7.5,0.5 Z" fill="#a8a8a8"/><path d="M-5,0.3 Q-2,-3.3 1,-3.2 Q4,-3 5,0 Q3,3.2 0,3.3 Q-3,3.2 -5,0.3 Z" fill="#f2f2f2"/><circle cx="0.3" cy="0" r="2.4" fill="#a8a8a8"/><circle cx="-0.5" cy="-1" r="0.6" fill="#f2f2f2"/></g>
<path d="M1243.5,143 h11 M1249,137.5 v11" stroke="#e00000" stroke-width="3"/>
<path d="M1281,143 h11" stroke="#e00000" stroke-width="3"/>
<text x="1316.5" y="147.5" style="font-size:12px" fill="#222">a</text><line x1="1323.8" y1="136.5" x2="1323.8" y2="149" stroke="#222" stroke-width="0.9"/><text x="1325" y="147.5" style="font-size:12px" fill="#222">b</text>
<g transform="translate(1353.5,135.5) scale(1)"><path d="M0,14 L1,10 L11,0 L14,3 L4,13 Z" fill="#e8a838" stroke="#8a5a18" stroke-width="0.8"/><path d="M11,0 L14,3 L12.5,4.5 L9.5,1.5 Z" fill="#e03030"/><path d="M0,14 L1,10 L4,13 Z" fill="#555"/></g>
<rect x="1393" y="136" width="12" height="13" fill="#e8e8ee" stroke="#d0d0d8" stroke-width="0.6"/><path d="M1395,138 h5 v7 h2.5 l-3.5,4 l-3.5,-4 h2.5 v-5 h-3 Z" fill="#6a8ef0"/>
<rect x="1431" y="138" width="10" height="10" fill="#e88a60" stroke="#d83a22" stroke-width="1.2"/><path d="M1433.5,140.5 l5,5 M1438.5,140.5 l-5,5" stroke="#fff" stroke-width="1.5"/>
<g transform="translate(1169,167) scale(1)"><path d="M-7.5,0.5 Q-4,-6 1,-5.5 Q6,-5.2 8,0 Q5,5.5 0,5.5 Q-5,5.5 -7.5,0.5 Z" fill="#000"/><path d="M-5,0.3 Q-2,-3.3 1,-3.2 Q4,-3 5,0 Q3,3.2 0,3.3 Q-3,3.2 -5,0.3 Z" fill="#fff"/><circle cx="0.3" cy="0" r="2.4" fill="#000"/><circle cx="-0.5" cy="-1" r="0.6" fill="#fff"/></g>
<text x="1205.3" y="172" style="font-size:13.4px" fill="#111">Model (*Model_Space)</text>
<g transform="translate(1169,187) scale(1)"><path d="M-7.5,0.5 Q-4,-6 1,-5.5 Q6,-5.2 8,0 Q5,5.5 0,5.5 Q-5,5.5 -7.5,0.5 Z" fill="#000"/><path d="M-5,0.3 Q-2,-3.3 1,-3.2 Q4,-3 5,0 Q3,3.2 0,3.3 Q-3,3.2 -5,0.3 Z" fill="#fff"/><circle cx="0.3" cy="0" r="2.4" fill="#000"/><circle cx="-0.5" cy="-1" r="0.6" fill="#fff"/></g>
<text x="1205.3" y="192" style="font-size:13.4px" fill="#111">Layout1 (*Paper_Space)</text>
<g transform="translate(1169,207) scale(1)"><path d="M-7.5,0.5 Q-4,-6 1,-5.5 Q6,-5.2 8,0 Q5,5.5 0,5.5 Q-5,5.5 -7.5,0.5 Z" fill="#3a4a5a"/><path d="M-5,0.3 Q-2,-3.3 1,-3.2 Q4,-3 5,0 Q3,3.2 0,3.3 Q-3,3.2 -5,0.3 Z" fill="#d4d4d4"/><circle cx="0.3" cy="0" r="2.4" fill="#3a4a5a"/><circle cx="-0.5" cy="-1" r="0.6" fill="#d4d4d4"/></g>
<text x="1205.3" y="212" style="font-size:13.4px" fill="#111">Layout2 (*Paper_Space0)</text>
<g transform="translate(1169,227) scale(1)"><path d="M-7.5,0.5 Q-4,-6 1,-5.5 Q6,-5.2 8,0 Q5,5.5 0,5.5 Q-5,5.5 -7.5,0.5 Z" fill="#000"/><path d="M-5,0.3 Q-2,-3.3 1,-3.2 Q4,-3 5,0 Q3,3.2 0,3.3 Q-3,3.2 -5,0.3 Z" fill="#fff"/><circle cx="0.3" cy="0" r="2.4" fill="#000"/><circle cx="-0.5" cy="-1" r="0.6" fill="#fff"/></g>
<text x="1205.3" y="232" style="font-size:13.4px" fill="#111">Bordure</text>
<g transform="translate(1184,200) scale(1.0)"><path d="M0,14 L1,10 L11,0 L14,3 L4,13 Z" fill="#e8a838" stroke="#8a5a18" stroke-width="0.8"/><path d="M11,0 L14,3 L12.5,4.5 L9.5,1.5 Z" fill="#e03030"/><path d="M0,14 L1,10 L4,13 Z" fill="#555"/></g>
<circle cx="1164" cy="336" r="7" fill="#6c6c6c"/><path d="M1161,333 L1167,339 M1167,333 L1161,339" stroke="#f0f0f0" stroke-width="1.8"/><circle cx="1182" cy="336" r="7" fill="#6c6c6c"/><rect x="1180.2" y="332" width="5.5" height="4.5" fill="none" stroke="#f0f0f0" stroke-width="1.2"/><rect x="1178" y="334.5" width="5.5" height="4.5" fill="#6c6c6c" stroke="#f0f0f0" stroke-width="1.2"/>
<text x="1322.5" y="341" text-anchor="middle" style="font-size:11.8px" fill="#3a3a3a">Liste des calques</text>
<g transform="translate(1185,361) scale(1)"><path d="M-7.5,0.5 Q-4,-6 1,-5.5 Q6,-5.2 8,0 Q5,5.5 0,5.5 Q-5,5.5 -7.5,0.5 Z" fill="#000"/><path d="M-5,0.3 Q-2,-3.3 1,-3.2 Q4,-3 5,0 Q3,3.2 0,3.3 Q-3,3.2 -5,0.3 Z" fill="#fff"/><circle cx="0.3" cy="0" r="2.4" fill="#000"/><circle cx="-0.5" cy="-1" r="0.6" fill="#fff"/></g>
<g transform="translate(1245,361) scale(1)"><path d="M-7.5,0.5 Q-4,-6 1,-5.5 Q6,-5.2 8,0 Q5,5.5 0,5.5 Q-5,5.5 -7.5,0.5 Z" fill="#a8a8a8"/><path d="M-5,0.3 Q-2,-3.3 1,-3.2 Q4,-3 5,0 Q3,3.2 0,3.3 Q-3,3.2 -5,0.3 Z" fill="#f2f2f2"/><circle cx="0.3" cy="0" r="2.4" fill="#a8a8a8"/><circle cx="-0.5" cy="-1" r="0.6" fill="#f2f2f2"/></g>
<path d="M1299.5,361 h11 M1305,355.5 v11" stroke="#e00000" stroke-width="3"/>
<path d="M1359,361 h11" stroke="#e00000" stroke-width="3"/>
<g transform="translate(1417,353.5) scale(1)"><path d="M0,14 L1,10 L11,0 L14,3 L4,13 Z" fill="#e8a838" stroke="#8a5a18" stroke-width="0.8"/><path d="M11,0 L14,3 L12.5,4.5 L9.5,1.5 Z" fill="#e03030"/><path d="M0,14 L1,10 L4,13 Z" fill="#555"/></g>
<rect x="1161.5" y="381" width="15.5" height="8.5" fill="#000" stroke="#000" stroke-width="1"/>
<text x="1183" y="389.8" style="font-size:13.4px" fill="#111">0</text>
<g transform="translate(1423,385) scale(1)"><path d="M-7.5,0.5 Q-4,-6 1,-5.5 Q6,-5.2 8,0 Q5,5.5 0,5.5 Q-5,5.5 -7.5,0.5 Z" fill="#000"/><path d="M-5,0.3 Q-2,-3.3 1,-3.2 Q4,-3 5,0 Q3,3.2 0,3.3 Q-3,3.2 -5,0.3 Z" fill="#fff"/><circle cx="0.3" cy="0" r="2.4" fill="#000"/><circle cx="-0.5" cy="-1" r="0.6" fill="#fff"/></g>
<path d="M1441.5,385 v-3 a3.5,3.5 0 0 1 7,0 v3" fill="none" stroke="#c4c4c4" stroke-width="1.6"/><rect x="1440" y="384.5" width="10" height="7" rx="1" fill="#c4c4c4"/>
<rect x="1161.5" y="401" width="15.5" height="8.5" fill="#000" stroke="#000" stroke-width="1"/>
<text x="1183" y="409.8" style="font-size:13.4px" fill="#111">Bordure</text>
<g transform="translate(1423,405) scale(1)"><path d="M-7.5,0.5 Q-4,-6 1,-5.5 Q6,-5.2 8,0 Q5,5.5 0,5.5 Q-5,5.5 -7.5,0.5 Z" fill="#000"/><path d="M-5,0.3 Q-2,-3.3 1,-3.2 Q4,-3 5,0 Q3,3.2 0,3.3 Q-3,3.2 -5,0.3 Z" fill="#fff"/><circle cx="0.3" cy="0" r="2.4" fill="#000"/><circle cx="-0.5" cy="-1" r="0.6" fill="#fff"/></g>
<path d="M1441.5,405 v-3 a3.5,3.5 0 0 1 7,0 v3" fill="none" stroke="#c4c4c4" stroke-width="1.6"/><rect x="1440" y="404.5" width="10" height="7" rx="1" fill="#c4c4c4"/>
<rect x="1161.5" y="421" width="15.5" height="8.5" fill="#f00000" stroke="#000" stroke-width="1"/>
<text x="1183" y="429.8" style="font-size:13.4px" fill="#111">Centre</text>
<g transform="translate(1423,425) scale(1)"><path d="M-7.5,0.5 Q-4,-6 1,-5.5 Q6,-5.2 8,0 Q5,5.5 0,5.5 Q-5,5.5 -7.5,0.5 Z" fill="#000"/><path d="M-5,0.3 Q-2,-3.3 1,-3.2 Q4,-3 5,0 Q3,3.2 0,3.3 Q-3,3.2 -5,0.3 Z" fill="#fff"/><circle cx="0.3" cy="0" r="2.4" fill="#000"/><circle cx="-0.5" cy="-1" r="0.6" fill="#fff"/></g>
<path d="M1441.5,425 v-3 a3.5,3.5 0 0 1 7,0 v3" fill="none" stroke="#c4c4c4" stroke-width="1.6"/><rect x="1440" y="424.5" width="10" height="7" rx="1" fill="#c4c4c4"/>
<rect x="1161.5" y="441" width="15.5" height="8.5" fill="#008080" stroke="#000" stroke-width="1"/>
<text x="1183" y="449.8" style="font-size:13.4px" fill="#111">Cotations</text>
<g transform="translate(1423,445) scale(1)"><path d="M-7.5,0.5 Q-4,-6 1,-5.5 Q6,-5.2 8,0 Q5,5.5 0,5.5 Q-5,5.5 -7.5,0.5 Z" fill="#000"/><path d="M-5,0.3 Q-2,-3.3 1,-3.2 Q4,-3 5,0 Q3,3.2 0,3.3 Q-3,3.2 -5,0.3 Z" fill="#fff"/><circle cx="0.3" cy="0" r="2.4" fill="#000"/><circle cx="-0.5" cy="-1" r="0.6" fill="#fff"/></g>
<path d="M1441.5,445 v-3 a3.5,3.5 0 0 1 7,0 v3" fill="none" stroke="#c4c4c4" stroke-width="1.6"/><rect x="1440" y="444.5" width="10" height="7" rx="1" fill="#c4c4c4"/>
<rect x="1161.5" y="461" width="15.5" height="8.5" fill="#fff" stroke="#000" stroke-width="1"/>
<text x="1183" y="469.8" style="font-size:13.4px" fill="#111">Defpoints</text>
<g transform="translate(1423,465) scale(1)"><path d="M-7.5,0.5 Q-4,-6 1,-5.5 Q6,-5.2 8,0 Q5,5.5 0,5.5 Q-5,5.5 -7.5,0.5 Z" fill="#000"/><path d="M-5,0.3 Q-2,-3.3 1,-3.2 Q4,-3 5,0 Q3,3.2 0,3.3 Q-3,3.2 -5,0.3 Z" fill="#fff"/><circle cx="0.3" cy="0" r="2.4" fill="#000"/><circle cx="-0.5" cy="-1" r="0.6" fill="#fff"/></g>
<path d="M1441.5,465 v-3 a3.5,3.5 0 0 1 7,0 v3" fill="none" stroke="#c4c4c4" stroke-width="1.6"/><rect x="1440" y="464.5" width="10" height="7" rx="1" fill="#c4c4c4"/>
<rect x="1161.5" y="481" width="15.5" height="8.5" fill="#e040f0" stroke="#3a3a5a" stroke-width="1"/>
<text x="1183" y="489.8" style="font-size:13.4px" fill="#fff">Fenêtres de présentation</text>
<g transform="translate(1423,485) scale(1)"><path d="M-7.5,0.5 Q-4,-6 1,-5.5 Q6,-5.2 8,0 Q5,5.5 0,5.5 Q-5,5.5 -7.5,0.5 Z" fill="#1a3268"/><path d="M-5,0.3 Q-2,-3.3 1,-3.2 Q4,-3 5,0 Q3,3.2 0,3.3 Q-3,3.2 -5,0.3 Z" fill="#0c4fd8"/><circle cx="0.3" cy="0" r="2.4" fill="#1a3268"/><circle cx="-0.5" cy="-1" r="0.6" fill="#0c4fd8"/></g>
<path d="M1441.5,485 v-3 a3.5,3.5 0 0 1 7,0 v3" fill="none" stroke="#a9b9d4" stroke-width="1.6"/><rect x="1440" y="484.5" width="10" height="7" rx="1" fill="#a9b9d4"/>
<rect x="1161.5" y="501" width="15.5" height="8.5" fill="#000" stroke="#000" stroke-width="1"/>
<text x="1183" y="509.8" style="font-size:13.4px" fill="#111">Visible</text>
<g transform="translate(1423,505) scale(1)"><path d="M-7.5,0.5 Q-4,-6 1,-5.5 Q6,-5.2 8,0 Q5,5.5 0,5.5 Q-5,5.5 -7.5,0.5 Z" fill="#000"/><path d="M-5,0.3 Q-2,-3.3 1,-3.2 Q4,-3 5,0 Q3,3.2 0,3.3 Q-3,3.2 -5,0.3 Z" fill="#fff"/><circle cx="0.3" cy="0" r="2.4" fill="#000"/><circle cx="-0.5" cy="-1" r="0.6" fill="#fff"/></g>
<path d="M1441.5,505 v-3 a3.5,3.5 0 0 1 7,0 v3" fill="none" stroke="#c4c4c4" stroke-width="1.6"/><rect x="1440" y="504.5" width="10" height="7" rx="1" fill="#c4c4c4"/>
<g transform="translate(1395,478) scale(1)"><path d="M0,14 L1,10 L11,0 L14,3 L4,13 Z" fill="#e8a838" stroke="#8a5a18" stroke-width="0.8"/><path d="M11,0 L14,3 L12.5,4.5 L9.5,1.5 Z" fill="#e03030"/><path d="M0,14 L1,10 L4,13 Z" fill="#555"/></g><rect x="1462.0" y="115.5" width="1.6" height="1.6" fill="#a8a8a8"/>
<rect x="1467.3" y="115.5" width="1.6" height="1.6" fill="#a8a8a8"/>
<rect x="1472.6" y="115.5" width="1.6" height="1.6" fill="#a8a8a8"/>
<rect x="1477.9" y="115.5" width="1.6" height="1.6" fill="#a8a8a8"/>
<rect x="1483.2" y="115.5" width="1.6" height="1.6" fill="#a8a8a8"/>
<rect x="1488.5" y="115.5" width="1.6" height="1.6" fill="#a8a8a8"/>
<rect x="1456" y="120" width="42" height="42.5" rx="6" fill="#b8b8b8"/>
<g transform="translate(1463,127)"><rect x="0.5" y="0.5" width="27" height="27" fill="#fff" stroke="#111" stroke-width="1"/><rect x="0.5" y="0.5" width="27" height="4.5" fill="#000"/><rect x="1.5" y="1.5" width="3.5" height="3" fill="#fff"/><path d="M8,12 L17,8 L17,21 L8,25 Z" fill="#aaa" stroke="#444" stroke-width="0.8"/><path d="M11,13 L20,9 L20,22 L11,26 Z" fill="#fff" stroke="#444" stroke-width="0.8"/><path d="M13,22 L17,13 L18,21" fill="none" stroke="#e03030" stroke-width="0.8"/></g>
<rect x="1456" y="167.5" width="42" height="42.0" rx="6" fill="#b8b8b8"/>
<g transform="translate(1463,174)"><rect x="0.5" y="0.5" width="27" height="27" fill="#fff" stroke="#111" stroke-width="1"/><rect x="0.5" y="0.5" width="27" height="4.5" fill="#000"/><rect x="1.5" y="1.5" width="3.5" height="3" fill="#fff"/><rect x="6" y="9" width="12" height="9" fill="#f6eec8" stroke="#555" stroke-width="0.8"/><circle cx="17" cy="18.5" r="5" fill="#f6eec8" stroke="#555" stroke-width="0.8"/></g>
<g transform="translate(1463,221)"><rect x="0.5" y="0.5" width="27" height="27" fill="#fff" stroke="#111" stroke-width="1"/><rect x="0.5" y="0.5" width="27" height="4.5" fill="#000"/><rect x="1.5" y="1.5" width="3.5" height="3" fill="#fff"/><rect x="6" y="10" width="16" height="12" rx="2" fill="#f4f4f4" stroke="#b8c8e8" stroke-width="1"/></g>
<line x1="1458" y1="262.5" x2="1500" y2="262.5" stroke="#555" stroke-width="1" stroke-dasharray="1 2"/>
<g transform="translate(1463,277)"><rect x="0.5" y="0.5" width="27" height="27" fill="#fff" stroke="#111" stroke-width="1"/><rect x="0.5" y="0.5" width="27" height="4.5" fill="#000"/><rect x="1.5" y="1.5" width="3.5" height="3" fill="#fff"/><rect x="4" y="9" width="4" height="3" fill="#000"/><rect x="4" y="15" width="4" height="3" fill="#000"/><rect x="4" y="21" width="4" height="3" fill="#000"/><rect x="10.5" y="9" width="14" height="3" fill="none" stroke="#333" stroke-width="0.8"/><rect x="10.5" y="15" width="14" height="3" fill="none" stroke="#333" stroke-width="0.8"/><rect x="10.5" y="21" width="14" height="3" fill="none" stroke="#333" stroke-width="0.8"/></g>
<g transform="translate(1463,323)"><rect x="0.5" y="0.5" width="27" height="27" fill="#fff" stroke="#111" stroke-width="1"/><rect x="0.5" y="0.5" width="27" height="4.5" fill="#000"/><rect x="1.5" y="1.5" width="3.5" height="3" fill="#fff"/><path d="M6,9 Q14,7 22,9 L15.5,16 L15.5,24 L12.5,22 L12.5,16 Z" fill="#aaa" stroke="#555" stroke-width="0.8"/></g>
<g transform="translate(1463,369)"><rect x="0.5" y="0.5" width="27" height="27" fill="#fff" stroke="#111" stroke-width="1"/><rect x="0.5" y="0.5" width="27" height="4.5" fill="#000"/><rect x="1.5" y="1.5" width="3.5" height="3" fill="#fff"/><path d="M5,9 L11,13 L11,20 L5,24 Z" fill="none" stroke="#444" stroke-width="0.9"/><rect x="11" y="12.5" width="9" height="8" rx="1.5" fill="#bbb" stroke="#555" stroke-width="0.8"/><line x1="3" y1="16.5" x2="25" y2="16.5" stroke="#e06060" stroke-width="0.6" stroke-dasharray="1.5 1"/></g>
<line x1="1458" y1="410.5" x2="1500" y2="410.5" stroke="#555" stroke-width="1" stroke-dasharray="1 2"/>
<rect x="1456" y="418" width="42" height="42.5" rx="6" fill="#b8b8b8"/>
<g transform="translate(1463,425)"><rect x="0.5" y="0.5" width="27" height="27" fill="#fff" stroke="#111" stroke-width="1"/><rect x="0.5" y="0.5" width="27" height="4.5" fill="#000"/><rect x="1.5" y="1.5" width="3.5" height="3" fill="#fff"/><path d="M3,9 h8 M3,12 h7 M3,15 h8 M3,18 h8" stroke="#888" stroke-width="0.8"/><line x1="0" y1="23" x2="28" y2="23" stroke="#333" stroke-width="0.8"/><path d="M3,25.5 h3 M10,25.5 h12" stroke="#444" stroke-width="0.8"/></g>
<g transform="translate(1463,472.5)"><rect x="0.5" y="0.5" width="27" height="27" fill="#fff" stroke="#111" stroke-width="1"/><rect x="0.5" y="0.5" width="27" height="4.5" fill="#000"/><rect x="1.5" y="1.5" width="3.5" height="3" fill="#fff"/><rect x="7.5" y="8.5" width="13" height="15" fill="#c88a28"/><rect x="9" y="10.5" width="10" height="12" fill="#f6f6f6"/><rect x="11" y="7.5" width="6" height="3" fill="#999"/><path d="M15.5,22.5 L19,22.5 L19,19 Z" fill="#999"/></g><line x1="253.5" y1="803" x2="253.5" y2="842" stroke="#8a8a8a" stroke-width="1"/>
<text x="2" y="815.5" text-anchor="start" style="font-size:9.4px;letter-spacing:0.42px" fill="#1a1a1a">84.6635,120.1887</text>
<text x="2" y="835.5" text-anchor="start" style="font-size:9.4px;letter-spacing:0.42px" fill="#1a1a1a">@-135.3365,0.1887</text>
<text x="256" y="815.5" text-anchor="start" style="font-size:9.4px;letter-spacing:0.42px" fill="#1a1a1a">147.0144&lt;55°</text>
<text x="256" y="835.5" text-anchor="start" style="font-size:9.4px;letter-spacing:0.42px" fill="#1a1a1a">@135.3366&lt;180°</text>
<circle cx="509" cy="821.7" r="2.8" fill="#c4c4c4"/>
<circle cx="943" cy="821.7" r="2.8" fill="#c4c4c4"/>
<circle cx="1272.5" cy="821.7" r="2.8" fill="#c4c4c4"/>
<text x="699" y="819.6" text-anchor="end" style="font-size:9.4px;letter-spacing:0.42px" fill="#1a1a1a">Sélectionne une entité ou une région</text>
<text x="699" y="830.6" text-anchor="end" style="font-size:9.4px;letter-spacing:0.42px" fill="#1a1a1a">Déplacer l’entité ou la référence</text>
<text x="949" y="819.6" text-anchor="start" style="font-size:9.4px;letter-spacing:0.42px" fill="#1a1a1a">Entités sélectionnées :</text>
<text x="949" y="830.6" text-anchor="start" style="font-size:9.4px;letter-spacing:0.42px" fill="#1a1a1a">1 Fenêtre de présentation sur calque "Fenêtres de présentation".</text>
<path d="M717.5,816 Q717.5,805.5 726.3,805.5 Q735,805.5 735,816 L735,826 Q735,836.5 726.3,836.5 Q717.5,836.5 717.5,826 Z" fill="#fff" stroke="#333" stroke-width="0.9"/>
<line x1="717.5" y1="818" x2="735" y2="818" stroke="#333" stroke-width="0.8"/><line x1="726.3" y1="805.5" x2="726.3" y2="818" stroke="#333" stroke-width="0.8"/>
<rect x="724.8" y="808" width="3" height="6" rx="1.5" fill="#fff" stroke="#333" stroke-width="0.8"/>
</svg>

</body></html>
